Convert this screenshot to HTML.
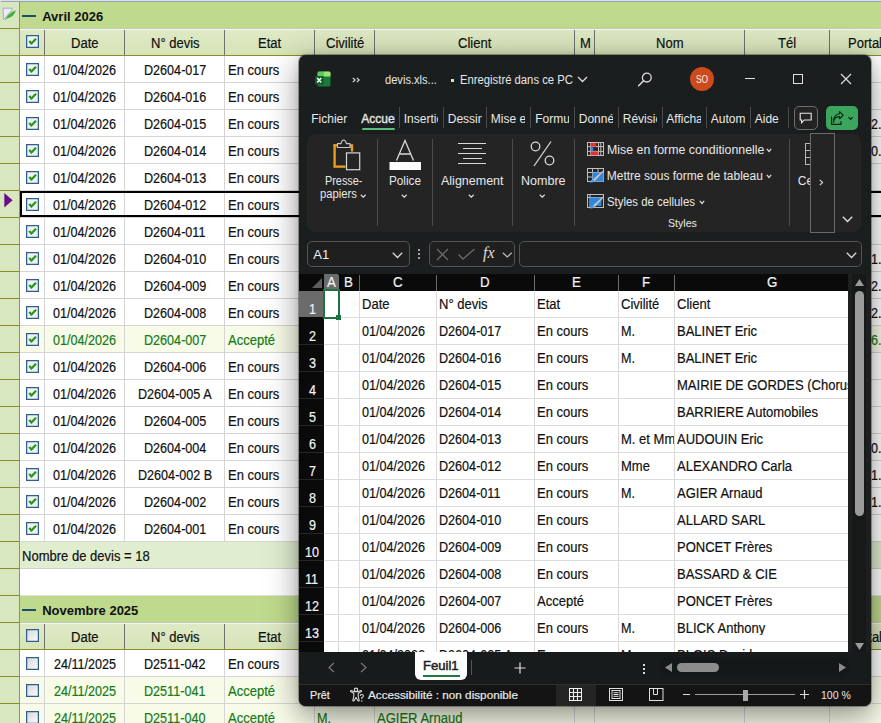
<!DOCTYPE html>
<html><head><meta charset="utf-8"><style>
html,body{margin:0;padding:0;}
body{width:881px;height:723px;overflow:hidden;position:relative;background:#fff;font-family:"Liberation Sans",sans-serif;}
.a{position:absolute;display:block;}
.t{position:absolute;white-space:nowrap;}
</style></head><body>
<div class="a" style="left:0px;top:0px;width:881px;height:1px;background:#e2e0dc"></div>
<div class="a" style="left:0px;top:1px;width:881px;height:1px;background:#8ea6c0"></div>
<div class="a" style="left:0px;top:0px;width:1px;height:723px;background:#dfe5ec"></div>
<div class="a" style="left:0px;top:2px;width:20px;height:26px;background:#d9e7c1"></div>
<div class="a" style="left:20px;top:2px;width:861px;height:26px;background:#bfda8d"></div>
<div class="a" style="left:20px;top:28px;width:861px;height:1px;background:#c4cbb6"></div>
<div class="a" style="left:19px;top:2px;width:1px;height:27px;background:#8c8c8c"></div>
<div class="a" style="left:0px;top:28px;width:19px;height:1px;background:#8d8b22"></div>
<div class="a" style="left:22px;top:15px;width:14px;height:2px;background:#1d4e70"></div>
<div class="t" style="left:42.22px;top:10px;font-size:13px;line-height:13px;color:#111;font-weight:bold;">Avril 2026</div>
<svg class="a" style="left:2px;top:7px" width="15" height="15" viewBox="0 0 15 15"><path d="M1 1.2 H10 V3 L1.6 12.6 Z" fill="#ececf2" stroke="#a4a4bc" stroke-width="0.9" stroke-linejoin="round"/><path d="M3 13.2 C4.5 9.5 7.5 5.5 13.8 3.2 C13.2 6.8 11 9.8 6.8 11 L5.6 11.2 Z" fill="#47b84a"/><path d="M5.5 10.5 L11.5 5.5" stroke="#2f9a36" stroke-width="0.7"/></svg>
<div class="a" style="left:0px;top:29px;width:19px;height:27px;background:#d9e7c1"></div>
<div class="a" style="left:19px;top:29px;width:1px;height:27px;background:#8c8c8c"></div>
<div class="a" style="left:0px;top:55px;width:19px;height:1px;background:#8d8b22"></div>
<div class="a" style="left:20px;top:29px;width:861px;height:26px;background:linear-gradient(#dfeac6,#d6e4b8)"></div>
<div class="a" style="left:20px;top:29px;width:861px;height:1px;background:#f3f5f0"></div>
<div class="a" style="left:44px;top:30px;width:1px;height:25px;background:#707070"></div>
<div class="a" style="left:124px;top:30px;width:1px;height:25px;background:#707070"></div>
<div class="a" style="left:224px;top:30px;width:1px;height:25px;background:#707070"></div>
<div class="a" style="left:314px;top:30px;width:1px;height:25px;background:#707070"></div>
<div class="a" style="left:374px;top:30px;width:1px;height:25px;background:#707070"></div>
<div class="a" style="left:574px;top:30px;width:1px;height:25px;background:#707070"></div>
<div class="a" style="left:594px;top:30px;width:1px;height:25px;background:#707070"></div>
<div class="a" style="left:744px;top:30px;width:1px;height:25px;background:#707070"></div>
<div class="a" style="left:829px;top:30px;width:1px;height:25px;background:#707070"></div>
<div class="a" style="left:0px;top:55px;width:881px;height:1px;background:#8d8b22"></div>
<svg class="a" style="left:26px;top:35px" width="13" height="13" viewBox="0 0 13 13"><rect x="0.6" y="0.6" width="11.8" height="11.8" fill="#f1f1ef" stroke="#2f5f90" stroke-width="1.3"/><path d="M3.3 5.8 L5.4 8.6 L10 3.8" fill="none" stroke="#1f9a1f" stroke-width="2.2" stroke-linejoin="round"/></svg>
<div class="t" style="left:71.25px;top:36px;font-size:14px;line-height:14px;color:#111;transform:scaleX(0.9300);transform-origin:0 0;-webkit-text-stroke:0.2px #111;">Date</div>
<div class="t" style="left:150.69px;top:36px;font-size:14px;line-height:14px;color:#111;transform:scaleX(0.9300);transform-origin:0 0;-webkit-text-stroke:0.2px #111;">N° devis</div>
<div class="t" style="left:258.42px;top:36px;font-size:14px;line-height:14px;color:#111;transform:scaleX(0.9300);transform-origin:0 0;-webkit-text-stroke:0.2px #111;">Etat</div>
<div class="t" style="left:325.83px;top:36px;font-size:14px;line-height:14px;color:#111;transform:scaleX(0.9300);transform-origin:0 0;-webkit-text-stroke:0.2px #111;">Civilité</div>
<div class="t" style="left:458.36px;top:36px;font-size:14px;line-height:14px;color:#111;transform:scaleX(0.9300);transform-origin:0 0;-webkit-text-stroke:0.2px #111;">Client</div>
<div class="t" style="left:579.58px;top:36px;font-size:14px;line-height:14px;color:#111;transform:scaleX(0.9300);transform-origin:0 0;-webkit-text-stroke:0.2px #111;">M</div>
<div class="t" style="left:656.26px;top:36px;font-size:14px;line-height:14px;color:#111;transform:scaleX(0.9300);transform-origin:0 0;-webkit-text-stroke:0.2px #111;">Nom</div>
<div class="t" style="left:778.46px;top:36px;font-size:14px;line-height:14px;color:#111;transform:scaleX(0.9300);transform-origin:0 0;-webkit-text-stroke:0.2px #111;">Tél</div>
<div class="t" style="left:848.16px;top:36px;font-size:14px;line-height:14px;color:#111;transform:scaleX(0.9300);transform-origin:0 0;-webkit-text-stroke:0.2px #111;">Portal</div>
<div class="a" style="left:0px;top:56px;width:19px;height:27px;background:#d9e7c1"></div>
<div class="a" style="left:19px;top:56px;width:1px;height:27px;background:#8c8c8c"></div>
<div class="a" style="left:0px;top:82px;width:19px;height:1px;background:#8d8b22"></div>
<div class="a" style="left:20px;top:56px;width:861px;height:26px;background:#ffffff"></div>
<div class="a" style="left:20px;top:82px;width:861px;height:1px;background:#d5d5d5"></div>
<div class="a" style="left:44px;top:56px;width:1px;height:26px;background:#d5d5d5"></div>
<div class="a" style="left:124px;top:56px;width:1px;height:26px;background:#d5d5d5"></div>
<div class="a" style="left:224px;top:56px;width:1px;height:26px;background:#d5d5d5"></div>
<div class="a" style="left:314px;top:56px;width:1px;height:26px;background:#d5d5d5"></div>
<div class="a" style="left:374px;top:56px;width:1px;height:26px;background:#d5d5d5"></div>
<div class="a" style="left:574px;top:56px;width:1px;height:26px;background:#d5d5d5"></div>
<div class="a" style="left:594px;top:56px;width:1px;height:26px;background:#d5d5d5"></div>
<div class="a" style="left:744px;top:56px;width:1px;height:26px;background:#d5d5d5"></div>
<div class="a" style="left:829px;top:56px;width:1px;height:26px;background:#d5d5d5"></div>
<svg class="a" style="left:26px;top:63px" width="13" height="13" viewBox="0 0 13 13"><rect x="0.6" y="0.6" width="11.8" height="11.8" fill="#f1f1ef" stroke="#2f5f90" stroke-width="1.3"/><path d="M3.3 5.8 L5.4 8.6 L10 3.8" fill="none" stroke="#1f9a1f" stroke-width="2.2" stroke-linejoin="round"/></svg>
<div class="t" style="left:53.47px;top:63px;font-size:14px;line-height:14px;color:#111;transform:scaleX(0.9000);transform-origin:0 0;-webkit-text-stroke:0.2px #111;">01/04/2026</div>
<div class="t" style="left:143.83px;top:63px;font-size:14px;line-height:14px;color:#111;transform:scaleX(0.9000);transform-origin:0 0;-webkit-text-stroke:0.2px #111;">D2604-017</div>
<div class="t" style="left:228.16px;top:63px;font-size:14px;line-height:14px;color:#111;transform:scaleX(0.9300);transform-origin:0 0;-webkit-text-stroke:0.2px #111;">En cours</div>
<div class="a" style="left:0px;top:83px;width:19px;height:27px;background:#d9e7c1"></div>
<div class="a" style="left:19px;top:83px;width:1px;height:27px;background:#8c8c8c"></div>
<div class="a" style="left:0px;top:109px;width:19px;height:1px;background:#8d8b22"></div>
<div class="a" style="left:20px;top:83px;width:861px;height:26px;background:#ffffff"></div>
<div class="a" style="left:20px;top:109px;width:861px;height:1px;background:#d5d5d5"></div>
<div class="a" style="left:44px;top:83px;width:1px;height:26px;background:#d5d5d5"></div>
<div class="a" style="left:124px;top:83px;width:1px;height:26px;background:#d5d5d5"></div>
<div class="a" style="left:224px;top:83px;width:1px;height:26px;background:#d5d5d5"></div>
<div class="a" style="left:314px;top:83px;width:1px;height:26px;background:#d5d5d5"></div>
<div class="a" style="left:374px;top:83px;width:1px;height:26px;background:#d5d5d5"></div>
<div class="a" style="left:574px;top:83px;width:1px;height:26px;background:#d5d5d5"></div>
<div class="a" style="left:594px;top:83px;width:1px;height:26px;background:#d5d5d5"></div>
<div class="a" style="left:744px;top:83px;width:1px;height:26px;background:#d5d5d5"></div>
<div class="a" style="left:829px;top:83px;width:1px;height:26px;background:#d5d5d5"></div>
<svg class="a" style="left:26px;top:90px" width="13" height="13" viewBox="0 0 13 13"><rect x="0.6" y="0.6" width="11.8" height="11.8" fill="#f1f1ef" stroke="#2f5f90" stroke-width="1.3"/><path d="M3.3 5.8 L5.4 8.6 L10 3.8" fill="none" stroke="#1f9a1f" stroke-width="2.2" stroke-linejoin="round"/></svg>
<div class="t" style="left:53.47px;top:90px;font-size:14px;line-height:14px;color:#111;transform:scaleX(0.9000);transform-origin:0 0;-webkit-text-stroke:0.2px #111;">01/04/2026</div>
<div class="t" style="left:143.83px;top:90px;font-size:14px;line-height:14px;color:#111;transform:scaleX(0.9000);transform-origin:0 0;-webkit-text-stroke:0.2px #111;">D2604-016</div>
<div class="t" style="left:228.16px;top:90px;font-size:14px;line-height:14px;color:#111;transform:scaleX(0.9300);transform-origin:0 0;-webkit-text-stroke:0.2px #111;">En cours</div>
<div class="a" style="left:0px;top:110px;width:19px;height:27px;background:#d9e7c1"></div>
<div class="a" style="left:19px;top:110px;width:1px;height:27px;background:#8c8c8c"></div>
<div class="a" style="left:0px;top:136px;width:19px;height:1px;background:#8d8b22"></div>
<div class="a" style="left:20px;top:110px;width:861px;height:26px;background:#ffffff"></div>
<div class="a" style="left:20px;top:136px;width:861px;height:1px;background:#d5d5d5"></div>
<div class="a" style="left:44px;top:110px;width:1px;height:26px;background:#d5d5d5"></div>
<div class="a" style="left:124px;top:110px;width:1px;height:26px;background:#d5d5d5"></div>
<div class="a" style="left:224px;top:110px;width:1px;height:26px;background:#d5d5d5"></div>
<div class="a" style="left:314px;top:110px;width:1px;height:26px;background:#d5d5d5"></div>
<div class="a" style="left:374px;top:110px;width:1px;height:26px;background:#d5d5d5"></div>
<div class="a" style="left:574px;top:110px;width:1px;height:26px;background:#d5d5d5"></div>
<div class="a" style="left:594px;top:110px;width:1px;height:26px;background:#d5d5d5"></div>
<div class="a" style="left:744px;top:110px;width:1px;height:26px;background:#d5d5d5"></div>
<div class="a" style="left:829px;top:110px;width:1px;height:26px;background:#d5d5d5"></div>
<svg class="a" style="left:26px;top:117px" width="13" height="13" viewBox="0 0 13 13"><rect x="0.6" y="0.6" width="11.8" height="11.8" fill="#f1f1ef" stroke="#2f5f90" stroke-width="1.3"/><path d="M3.3 5.8 L5.4 8.6 L10 3.8" fill="none" stroke="#1f9a1f" stroke-width="2.2" stroke-linejoin="round"/></svg>
<div class="t" style="left:53.47px;top:117px;font-size:14px;line-height:14px;color:#111;transform:scaleX(0.9000);transform-origin:0 0;-webkit-text-stroke:0.2px #111;">01/04/2026</div>
<div class="t" style="left:143.83px;top:117px;font-size:14px;line-height:14px;color:#111;transform:scaleX(0.9000);transform-origin:0 0;-webkit-text-stroke:0.2px #111;">D2604-015</div>
<div class="t" style="left:228.16px;top:117px;font-size:14px;line-height:14px;color:#111;transform:scaleX(0.9300);transform-origin:0 0;-webkit-text-stroke:0.2px #111;">En cours</div>
<div class="t" style="left:871.16px;top:117px;font-size:14px;line-height:14px;color:#111;transform:scaleX(0.9000);transform-origin:0 0;-webkit-text-stroke:0.2px #111;">2.2</div>
<div class="a" style="left:0px;top:137px;width:19px;height:27px;background:#d9e7c1"></div>
<div class="a" style="left:19px;top:137px;width:1px;height:27px;background:#8c8c8c"></div>
<div class="a" style="left:0px;top:163px;width:19px;height:1px;background:#8d8b22"></div>
<div class="a" style="left:20px;top:137px;width:861px;height:26px;background:#ffffff"></div>
<div class="a" style="left:20px;top:163px;width:861px;height:1px;background:#d5d5d5"></div>
<div class="a" style="left:44px;top:137px;width:1px;height:26px;background:#d5d5d5"></div>
<div class="a" style="left:124px;top:137px;width:1px;height:26px;background:#d5d5d5"></div>
<div class="a" style="left:224px;top:137px;width:1px;height:26px;background:#d5d5d5"></div>
<div class="a" style="left:314px;top:137px;width:1px;height:26px;background:#d5d5d5"></div>
<div class="a" style="left:374px;top:137px;width:1px;height:26px;background:#d5d5d5"></div>
<div class="a" style="left:574px;top:137px;width:1px;height:26px;background:#d5d5d5"></div>
<div class="a" style="left:594px;top:137px;width:1px;height:26px;background:#d5d5d5"></div>
<div class="a" style="left:744px;top:137px;width:1px;height:26px;background:#d5d5d5"></div>
<div class="a" style="left:829px;top:137px;width:1px;height:26px;background:#d5d5d5"></div>
<svg class="a" style="left:26px;top:144px" width="13" height="13" viewBox="0 0 13 13"><rect x="0.6" y="0.6" width="11.8" height="11.8" fill="#f1f1ef" stroke="#2f5f90" stroke-width="1.3"/><path d="M3.3 5.8 L5.4 8.6 L10 3.8" fill="none" stroke="#1f9a1f" stroke-width="2.2" stroke-linejoin="round"/></svg>
<div class="t" style="left:53.47px;top:144px;font-size:14px;line-height:14px;color:#111;transform:scaleX(0.9000);transform-origin:0 0;-webkit-text-stroke:0.2px #111;">01/04/2026</div>
<div class="t" style="left:143.83px;top:144px;font-size:14px;line-height:14px;color:#111;transform:scaleX(0.9000);transform-origin:0 0;-webkit-text-stroke:0.2px #111;">D2604-014</div>
<div class="t" style="left:228.16px;top:144px;font-size:14px;line-height:14px;color:#111;transform:scaleX(0.9300);transform-origin:0 0;-webkit-text-stroke:0.2px #111;">En cours</div>
<div class="t" style="left:871.16px;top:144px;font-size:14px;line-height:14px;color:#111;transform:scaleX(0.9000);transform-origin:0 0;-webkit-text-stroke:0.2px #111;">0.4</div>
<div class="a" style="left:0px;top:164px;width:19px;height:27px;background:#d9e7c1"></div>
<div class="a" style="left:19px;top:164px;width:1px;height:27px;background:#8c8c8c"></div>
<div class="a" style="left:0px;top:190px;width:19px;height:1px;background:#8d8b22"></div>
<div class="a" style="left:20px;top:164px;width:861px;height:26px;background:#ffffff"></div>
<div class="a" style="left:20px;top:190px;width:861px;height:1px;background:#d5d5d5"></div>
<div class="a" style="left:44px;top:164px;width:1px;height:26px;background:#d5d5d5"></div>
<div class="a" style="left:124px;top:164px;width:1px;height:26px;background:#d5d5d5"></div>
<div class="a" style="left:224px;top:164px;width:1px;height:26px;background:#d5d5d5"></div>
<div class="a" style="left:314px;top:164px;width:1px;height:26px;background:#d5d5d5"></div>
<div class="a" style="left:374px;top:164px;width:1px;height:26px;background:#d5d5d5"></div>
<div class="a" style="left:574px;top:164px;width:1px;height:26px;background:#d5d5d5"></div>
<div class="a" style="left:594px;top:164px;width:1px;height:26px;background:#d5d5d5"></div>
<div class="a" style="left:744px;top:164px;width:1px;height:26px;background:#d5d5d5"></div>
<div class="a" style="left:829px;top:164px;width:1px;height:26px;background:#d5d5d5"></div>
<svg class="a" style="left:26px;top:171px" width="13" height="13" viewBox="0 0 13 13"><rect x="0.6" y="0.6" width="11.8" height="11.8" fill="#f1f1ef" stroke="#2f5f90" stroke-width="1.3"/><path d="M3.3 5.8 L5.4 8.6 L10 3.8" fill="none" stroke="#1f9a1f" stroke-width="2.2" stroke-linejoin="round"/></svg>
<div class="t" style="left:53.47px;top:171px;font-size:14px;line-height:14px;color:#111;transform:scaleX(0.9000);transform-origin:0 0;-webkit-text-stroke:0.2px #111;">01/04/2026</div>
<div class="t" style="left:143.83px;top:171px;font-size:14px;line-height:14px;color:#111;transform:scaleX(0.9000);transform-origin:0 0;-webkit-text-stroke:0.2px #111;">D2604-013</div>
<div class="t" style="left:228.16px;top:171px;font-size:14px;line-height:14px;color:#111;transform:scaleX(0.9300);transform-origin:0 0;-webkit-text-stroke:0.2px #111;">En cours</div>
<div class="a" style="left:0px;top:191px;width:19px;height:27px;background:#d9e7c1"></div>
<div class="a" style="left:19px;top:191px;width:1px;height:27px;background:#8c8c8c"></div>
<div class="a" style="left:0px;top:217px;width:19px;height:1px;background:#8d8b22"></div>
<div class="a" style="left:20px;top:191px;width:861px;height:26px;background:#ffffff"></div>
<div class="a" style="left:20px;top:217px;width:861px;height:1px;background:#d5d5d5"></div>
<div class="a" style="left:44px;top:191px;width:1px;height:26px;background:#d5d5d5"></div>
<div class="a" style="left:124px;top:191px;width:1px;height:26px;background:#d5d5d5"></div>
<div class="a" style="left:224px;top:191px;width:1px;height:26px;background:#d5d5d5"></div>
<div class="a" style="left:314px;top:191px;width:1px;height:26px;background:#d5d5d5"></div>
<div class="a" style="left:374px;top:191px;width:1px;height:26px;background:#d5d5d5"></div>
<div class="a" style="left:574px;top:191px;width:1px;height:26px;background:#d5d5d5"></div>
<div class="a" style="left:594px;top:191px;width:1px;height:26px;background:#d5d5d5"></div>
<div class="a" style="left:744px;top:191px;width:1px;height:26px;background:#d5d5d5"></div>
<div class="a" style="left:829px;top:191px;width:1px;height:26px;background:#d5d5d5"></div>
<svg class="a" style="left:26px;top:198px" width="13" height="13" viewBox="0 0 13 13"><rect x="0.6" y="0.6" width="11.8" height="11.8" fill="#f1f1ef" stroke="#2f5f90" stroke-width="1.3"/><path d="M3.3 5.8 L5.4 8.6 L10 3.8" fill="none" stroke="#1f9a1f" stroke-width="2.2" stroke-linejoin="round"/></svg>
<div class="t" style="left:53.47px;top:198px;font-size:14px;line-height:14px;color:#111;transform:scaleX(0.9000);transform-origin:0 0;-webkit-text-stroke:0.2px #111;">01/04/2026</div>
<div class="t" style="left:143.83px;top:198px;font-size:14px;line-height:14px;color:#111;transform:scaleX(0.9000);transform-origin:0 0;-webkit-text-stroke:0.2px #111;">D2604-012</div>
<div class="t" style="left:228.16px;top:198px;font-size:14px;line-height:14px;color:#111;transform:scaleX(0.9300);transform-origin:0 0;-webkit-text-stroke:0.2px #111;">En cours</div>
<div class="a" style="left:0px;top:218px;width:19px;height:27px;background:#d9e7c1"></div>
<div class="a" style="left:19px;top:218px;width:1px;height:27px;background:#8c8c8c"></div>
<div class="a" style="left:0px;top:244px;width:19px;height:1px;background:#8d8b22"></div>
<div class="a" style="left:20px;top:218px;width:861px;height:26px;background:#ffffff"></div>
<div class="a" style="left:20px;top:244px;width:861px;height:1px;background:#d5d5d5"></div>
<div class="a" style="left:44px;top:218px;width:1px;height:26px;background:#d5d5d5"></div>
<div class="a" style="left:124px;top:218px;width:1px;height:26px;background:#d5d5d5"></div>
<div class="a" style="left:224px;top:218px;width:1px;height:26px;background:#d5d5d5"></div>
<div class="a" style="left:314px;top:218px;width:1px;height:26px;background:#d5d5d5"></div>
<div class="a" style="left:374px;top:218px;width:1px;height:26px;background:#d5d5d5"></div>
<div class="a" style="left:574px;top:218px;width:1px;height:26px;background:#d5d5d5"></div>
<div class="a" style="left:594px;top:218px;width:1px;height:26px;background:#d5d5d5"></div>
<div class="a" style="left:744px;top:218px;width:1px;height:26px;background:#d5d5d5"></div>
<div class="a" style="left:829px;top:218px;width:1px;height:26px;background:#d5d5d5"></div>
<svg class="a" style="left:26px;top:225px" width="13" height="13" viewBox="0 0 13 13"><rect x="0.6" y="0.6" width="11.8" height="11.8" fill="#f1f1ef" stroke="#2f5f90" stroke-width="1.3"/><path d="M3.3 5.8 L5.4 8.6 L10 3.8" fill="none" stroke="#1f9a1f" stroke-width="2.2" stroke-linejoin="round"/></svg>
<div class="t" style="left:53.47px;top:225px;font-size:14px;line-height:14px;color:#111;transform:scaleX(0.9000);transform-origin:0 0;-webkit-text-stroke:0.2px #111;">01/04/2026</div>
<div class="t" style="left:144.29px;top:225px;font-size:14px;line-height:14px;color:#111;transform:scaleX(0.9000);transform-origin:0 0;-webkit-text-stroke:0.2px #111;">D2604-011</div>
<div class="t" style="left:228.16px;top:225px;font-size:14px;line-height:14px;color:#111;transform:scaleX(0.9300);transform-origin:0 0;-webkit-text-stroke:0.2px #111;">En cours</div>
<div class="a" style="left:0px;top:245px;width:19px;height:27px;background:#d9e7c1"></div>
<div class="a" style="left:19px;top:245px;width:1px;height:27px;background:#8c8c8c"></div>
<div class="a" style="left:0px;top:271px;width:19px;height:1px;background:#8d8b22"></div>
<div class="a" style="left:20px;top:245px;width:861px;height:26px;background:#ffffff"></div>
<div class="a" style="left:20px;top:271px;width:861px;height:1px;background:#d5d5d5"></div>
<div class="a" style="left:44px;top:245px;width:1px;height:26px;background:#d5d5d5"></div>
<div class="a" style="left:124px;top:245px;width:1px;height:26px;background:#d5d5d5"></div>
<div class="a" style="left:224px;top:245px;width:1px;height:26px;background:#d5d5d5"></div>
<div class="a" style="left:314px;top:245px;width:1px;height:26px;background:#d5d5d5"></div>
<div class="a" style="left:374px;top:245px;width:1px;height:26px;background:#d5d5d5"></div>
<div class="a" style="left:574px;top:245px;width:1px;height:26px;background:#d5d5d5"></div>
<div class="a" style="left:594px;top:245px;width:1px;height:26px;background:#d5d5d5"></div>
<div class="a" style="left:744px;top:245px;width:1px;height:26px;background:#d5d5d5"></div>
<div class="a" style="left:829px;top:245px;width:1px;height:26px;background:#d5d5d5"></div>
<svg class="a" style="left:26px;top:252px" width="13" height="13" viewBox="0 0 13 13"><rect x="0.6" y="0.6" width="11.8" height="11.8" fill="#f1f1ef" stroke="#2f5f90" stroke-width="1.3"/><path d="M3.3 5.8 L5.4 8.6 L10 3.8" fill="none" stroke="#1f9a1f" stroke-width="2.2" stroke-linejoin="round"/></svg>
<div class="t" style="left:53.47px;top:252px;font-size:14px;line-height:14px;color:#111;transform:scaleX(0.9000);transform-origin:0 0;-webkit-text-stroke:0.2px #111;">01/04/2026</div>
<div class="t" style="left:143.83px;top:252px;font-size:14px;line-height:14px;color:#111;transform:scaleX(0.9000);transform-origin:0 0;-webkit-text-stroke:0.2px #111;">D2604-010</div>
<div class="t" style="left:228.16px;top:252px;font-size:14px;line-height:14px;color:#111;transform:scaleX(0.9300);transform-origin:0 0;-webkit-text-stroke:0.2px #111;">En cours</div>
<div class="t" style="left:871.16px;top:252px;font-size:14px;line-height:14px;color:#111;transform:scaleX(0.9000);transform-origin:0 0;-webkit-text-stroke:0.2px #111;">1.1</div>
<div class="a" style="left:0px;top:272px;width:19px;height:27px;background:#d9e7c1"></div>
<div class="a" style="left:19px;top:272px;width:1px;height:27px;background:#8c8c8c"></div>
<div class="a" style="left:0px;top:298px;width:19px;height:1px;background:#8d8b22"></div>
<div class="a" style="left:20px;top:272px;width:861px;height:26px;background:#ffffff"></div>
<div class="a" style="left:20px;top:298px;width:861px;height:1px;background:#d5d5d5"></div>
<div class="a" style="left:44px;top:272px;width:1px;height:26px;background:#d5d5d5"></div>
<div class="a" style="left:124px;top:272px;width:1px;height:26px;background:#d5d5d5"></div>
<div class="a" style="left:224px;top:272px;width:1px;height:26px;background:#d5d5d5"></div>
<div class="a" style="left:314px;top:272px;width:1px;height:26px;background:#d5d5d5"></div>
<div class="a" style="left:374px;top:272px;width:1px;height:26px;background:#d5d5d5"></div>
<div class="a" style="left:574px;top:272px;width:1px;height:26px;background:#d5d5d5"></div>
<div class="a" style="left:594px;top:272px;width:1px;height:26px;background:#d5d5d5"></div>
<div class="a" style="left:744px;top:272px;width:1px;height:26px;background:#d5d5d5"></div>
<div class="a" style="left:829px;top:272px;width:1px;height:26px;background:#d5d5d5"></div>
<svg class="a" style="left:26px;top:279px" width="13" height="13" viewBox="0 0 13 13"><rect x="0.6" y="0.6" width="11.8" height="11.8" fill="#f1f1ef" stroke="#2f5f90" stroke-width="1.3"/><path d="M3.3 5.8 L5.4 8.6 L10 3.8" fill="none" stroke="#1f9a1f" stroke-width="2.2" stroke-linejoin="round"/></svg>
<div class="t" style="left:53.47px;top:279px;font-size:14px;line-height:14px;color:#111;transform:scaleX(0.9000);transform-origin:0 0;-webkit-text-stroke:0.2px #111;">01/04/2026</div>
<div class="t" style="left:143.83px;top:279px;font-size:14px;line-height:14px;color:#111;transform:scaleX(0.9000);transform-origin:0 0;-webkit-text-stroke:0.2px #111;">D2604-009</div>
<div class="t" style="left:228.16px;top:279px;font-size:14px;line-height:14px;color:#111;transform:scaleX(0.9300);transform-origin:0 0;-webkit-text-stroke:0.2px #111;">En cours</div>
<div class="t" style="left:871.16px;top:279px;font-size:14px;line-height:14px;color:#111;transform:scaleX(0.9000);transform-origin:0 0;-webkit-text-stroke:0.2px #111;">2.2</div>
<div class="a" style="left:0px;top:299px;width:19px;height:27px;background:#d9e7c1"></div>
<div class="a" style="left:19px;top:299px;width:1px;height:27px;background:#8c8c8c"></div>
<div class="a" style="left:0px;top:325px;width:19px;height:1px;background:#8d8b22"></div>
<div class="a" style="left:20px;top:299px;width:861px;height:26px;background:#ffffff"></div>
<div class="a" style="left:20px;top:325px;width:861px;height:1px;background:#d5d5d5"></div>
<div class="a" style="left:44px;top:299px;width:1px;height:26px;background:#d5d5d5"></div>
<div class="a" style="left:124px;top:299px;width:1px;height:26px;background:#d5d5d5"></div>
<div class="a" style="left:224px;top:299px;width:1px;height:26px;background:#d5d5d5"></div>
<div class="a" style="left:314px;top:299px;width:1px;height:26px;background:#d5d5d5"></div>
<div class="a" style="left:374px;top:299px;width:1px;height:26px;background:#d5d5d5"></div>
<div class="a" style="left:574px;top:299px;width:1px;height:26px;background:#d5d5d5"></div>
<div class="a" style="left:594px;top:299px;width:1px;height:26px;background:#d5d5d5"></div>
<div class="a" style="left:744px;top:299px;width:1px;height:26px;background:#d5d5d5"></div>
<div class="a" style="left:829px;top:299px;width:1px;height:26px;background:#d5d5d5"></div>
<svg class="a" style="left:26px;top:306px" width="13" height="13" viewBox="0 0 13 13"><rect x="0.6" y="0.6" width="11.8" height="11.8" fill="#f1f1ef" stroke="#2f5f90" stroke-width="1.3"/><path d="M3.3 5.8 L5.4 8.6 L10 3.8" fill="none" stroke="#1f9a1f" stroke-width="2.2" stroke-linejoin="round"/></svg>
<div class="t" style="left:53.47px;top:306px;font-size:14px;line-height:14px;color:#111;transform:scaleX(0.9000);transform-origin:0 0;-webkit-text-stroke:0.2px #111;">01/04/2026</div>
<div class="t" style="left:143.83px;top:306px;font-size:14px;line-height:14px;color:#111;transform:scaleX(0.9000);transform-origin:0 0;-webkit-text-stroke:0.2px #111;">D2604-008</div>
<div class="t" style="left:228.16px;top:306px;font-size:14px;line-height:14px;color:#111;transform:scaleX(0.9300);transform-origin:0 0;-webkit-text-stroke:0.2px #111;">En cours</div>
<div class="t" style="left:871.16px;top:306px;font-size:14px;line-height:14px;color:#111;transform:scaleX(0.9000);transform-origin:0 0;-webkit-text-stroke:0.2px #111;">2.2</div>
<div class="a" style="left:0px;top:326px;width:19px;height:27px;background:#d9e7c1"></div>
<div class="a" style="left:19px;top:326px;width:1px;height:27px;background:#8c8c8c"></div>
<div class="a" style="left:0px;top:352px;width:19px;height:1px;background:#8d8b22"></div>
<div class="a" style="left:20px;top:326px;width:861px;height:26px;background:#f8fbe8"></div>
<div class="a" style="left:20px;top:352px;width:861px;height:1px;background:#d5d5d5"></div>
<div class="a" style="left:44px;top:326px;width:1px;height:26px;background:#d5d5d5"></div>
<div class="a" style="left:124px;top:326px;width:1px;height:26px;background:#d5d5d5"></div>
<div class="a" style="left:224px;top:326px;width:1px;height:26px;background:#d5d5d5"></div>
<div class="a" style="left:314px;top:326px;width:1px;height:26px;background:#d5d5d5"></div>
<div class="a" style="left:374px;top:326px;width:1px;height:26px;background:#d5d5d5"></div>
<div class="a" style="left:574px;top:326px;width:1px;height:26px;background:#d5d5d5"></div>
<div class="a" style="left:594px;top:326px;width:1px;height:26px;background:#d5d5d5"></div>
<div class="a" style="left:744px;top:326px;width:1px;height:26px;background:#d5d5d5"></div>
<div class="a" style="left:829px;top:326px;width:1px;height:26px;background:#d5d5d5"></div>
<svg class="a" style="left:26px;top:333px" width="13" height="13" viewBox="0 0 13 13"><rect x="0.6" y="0.6" width="11.8" height="11.8" fill="#f1f1ef" stroke="#2f5f90" stroke-width="1.3"/><path d="M3.3 5.8 L5.4 8.6 L10 3.8" fill="none" stroke="#1f9a1f" stroke-width="2.2" stroke-linejoin="round"/></svg>
<div class="t" style="left:53.47px;top:333px;font-size:14px;line-height:14px;color:#157c19;transform:scaleX(0.9000);transform-origin:0 0;-webkit-text-stroke:0.2px #157c19;">01/04/2026</div>
<div class="t" style="left:143.83px;top:333px;font-size:14px;line-height:14px;color:#157c19;transform:scaleX(0.9000);transform-origin:0 0;-webkit-text-stroke:0.2px #157c19;">D2604-007</div>
<div class="t" style="left:228.16px;top:333px;font-size:14px;line-height:14px;color:#157c19;transform:scaleX(0.9300);transform-origin:0 0;-webkit-text-stroke:0.2px #157c19;">Accepté</div>
<div class="t" style="left:871.16px;top:333px;font-size:14px;line-height:14px;color:#157c19;transform:scaleX(0.9000);transform-origin:0 0;-webkit-text-stroke:0.2px #157c19;">6.6</div>
<div class="a" style="left:0px;top:353px;width:19px;height:27px;background:#d9e7c1"></div>
<div class="a" style="left:19px;top:353px;width:1px;height:27px;background:#8c8c8c"></div>
<div class="a" style="left:0px;top:379px;width:19px;height:1px;background:#8d8b22"></div>
<div class="a" style="left:20px;top:353px;width:861px;height:26px;background:#ffffff"></div>
<div class="a" style="left:20px;top:379px;width:861px;height:1px;background:#d5d5d5"></div>
<div class="a" style="left:44px;top:353px;width:1px;height:26px;background:#d5d5d5"></div>
<div class="a" style="left:124px;top:353px;width:1px;height:26px;background:#d5d5d5"></div>
<div class="a" style="left:224px;top:353px;width:1px;height:26px;background:#d5d5d5"></div>
<div class="a" style="left:314px;top:353px;width:1px;height:26px;background:#d5d5d5"></div>
<div class="a" style="left:374px;top:353px;width:1px;height:26px;background:#d5d5d5"></div>
<div class="a" style="left:574px;top:353px;width:1px;height:26px;background:#d5d5d5"></div>
<div class="a" style="left:594px;top:353px;width:1px;height:26px;background:#d5d5d5"></div>
<div class="a" style="left:744px;top:353px;width:1px;height:26px;background:#d5d5d5"></div>
<div class="a" style="left:829px;top:353px;width:1px;height:26px;background:#d5d5d5"></div>
<svg class="a" style="left:26px;top:360px" width="13" height="13" viewBox="0 0 13 13"><rect x="0.6" y="0.6" width="11.8" height="11.8" fill="#f1f1ef" stroke="#2f5f90" stroke-width="1.3"/><path d="M3.3 5.8 L5.4 8.6 L10 3.8" fill="none" stroke="#1f9a1f" stroke-width="2.2" stroke-linejoin="round"/></svg>
<div class="t" style="left:53.47px;top:360px;font-size:14px;line-height:14px;color:#111;transform:scaleX(0.9000);transform-origin:0 0;-webkit-text-stroke:0.2px #111;">01/04/2026</div>
<div class="t" style="left:143.83px;top:360px;font-size:14px;line-height:14px;color:#111;transform:scaleX(0.9000);transform-origin:0 0;-webkit-text-stroke:0.2px #111;">D2604-006</div>
<div class="t" style="left:228.16px;top:360px;font-size:14px;line-height:14px;color:#111;transform:scaleX(0.9300);transform-origin:0 0;-webkit-text-stroke:0.2px #111;">En cours</div>
<div class="a" style="left:0px;top:380px;width:19px;height:27px;background:#d9e7c1"></div>
<div class="a" style="left:19px;top:380px;width:1px;height:27px;background:#8c8c8c"></div>
<div class="a" style="left:0px;top:406px;width:19px;height:1px;background:#8d8b22"></div>
<div class="a" style="left:20px;top:380px;width:861px;height:26px;background:#ffffff"></div>
<div class="a" style="left:20px;top:406px;width:861px;height:1px;background:#d5d5d5"></div>
<div class="a" style="left:44px;top:380px;width:1px;height:26px;background:#d5d5d5"></div>
<div class="a" style="left:124px;top:380px;width:1px;height:26px;background:#d5d5d5"></div>
<div class="a" style="left:224px;top:380px;width:1px;height:26px;background:#d5d5d5"></div>
<div class="a" style="left:314px;top:380px;width:1px;height:26px;background:#d5d5d5"></div>
<div class="a" style="left:374px;top:380px;width:1px;height:26px;background:#d5d5d5"></div>
<div class="a" style="left:574px;top:380px;width:1px;height:26px;background:#d5d5d5"></div>
<div class="a" style="left:594px;top:380px;width:1px;height:26px;background:#d5d5d5"></div>
<div class="a" style="left:744px;top:380px;width:1px;height:26px;background:#d5d5d5"></div>
<div class="a" style="left:829px;top:380px;width:1px;height:26px;background:#d5d5d5"></div>
<svg class="a" style="left:26px;top:387px" width="13" height="13" viewBox="0 0 13 13"><rect x="0.6" y="0.6" width="11.8" height="11.8" fill="#f1f1ef" stroke="#2f5f90" stroke-width="1.3"/><path d="M3.3 5.8 L5.4 8.6 L10 3.8" fill="none" stroke="#1f9a1f" stroke-width="2.2" stroke-linejoin="round"/></svg>
<div class="t" style="left:53.47px;top:387px;font-size:14px;line-height:14px;color:#111;transform:scaleX(0.9000);transform-origin:0 0;-webkit-text-stroke:0.2px #111;">01/04/2026</div>
<div class="t" style="left:137.87px;top:387px;font-size:14px;line-height:14px;color:#111;transform:scaleX(0.9000);transform-origin:0 0;-webkit-text-stroke:0.2px #111;">D2604-005 A</div>
<div class="t" style="left:228.16px;top:387px;font-size:14px;line-height:14px;color:#111;transform:scaleX(0.9300);transform-origin:0 0;-webkit-text-stroke:0.2px #111;">En cours</div>
<div class="a" style="left:0px;top:407px;width:19px;height:27px;background:#d9e7c1"></div>
<div class="a" style="left:19px;top:407px;width:1px;height:27px;background:#8c8c8c"></div>
<div class="a" style="left:0px;top:433px;width:19px;height:1px;background:#8d8b22"></div>
<div class="a" style="left:20px;top:407px;width:861px;height:26px;background:#ffffff"></div>
<div class="a" style="left:20px;top:433px;width:861px;height:1px;background:#d5d5d5"></div>
<div class="a" style="left:44px;top:407px;width:1px;height:26px;background:#d5d5d5"></div>
<div class="a" style="left:124px;top:407px;width:1px;height:26px;background:#d5d5d5"></div>
<div class="a" style="left:224px;top:407px;width:1px;height:26px;background:#d5d5d5"></div>
<div class="a" style="left:314px;top:407px;width:1px;height:26px;background:#d5d5d5"></div>
<div class="a" style="left:374px;top:407px;width:1px;height:26px;background:#d5d5d5"></div>
<div class="a" style="left:574px;top:407px;width:1px;height:26px;background:#d5d5d5"></div>
<div class="a" style="left:594px;top:407px;width:1px;height:26px;background:#d5d5d5"></div>
<div class="a" style="left:744px;top:407px;width:1px;height:26px;background:#d5d5d5"></div>
<div class="a" style="left:829px;top:407px;width:1px;height:26px;background:#d5d5d5"></div>
<svg class="a" style="left:26px;top:414px" width="13" height="13" viewBox="0 0 13 13"><rect x="0.6" y="0.6" width="11.8" height="11.8" fill="#f1f1ef" stroke="#2f5f90" stroke-width="1.3"/><path d="M3.3 5.8 L5.4 8.6 L10 3.8" fill="none" stroke="#1f9a1f" stroke-width="2.2" stroke-linejoin="round"/></svg>
<div class="t" style="left:53.47px;top:414px;font-size:14px;line-height:14px;color:#111;transform:scaleX(0.9000);transform-origin:0 0;-webkit-text-stroke:0.2px #111;">01/04/2026</div>
<div class="t" style="left:143.83px;top:414px;font-size:14px;line-height:14px;color:#111;transform:scaleX(0.9000);transform-origin:0 0;-webkit-text-stroke:0.2px #111;">D2604-005</div>
<div class="t" style="left:228.16px;top:414px;font-size:14px;line-height:14px;color:#111;transform:scaleX(0.9300);transform-origin:0 0;-webkit-text-stroke:0.2px #111;">En cours</div>
<div class="a" style="left:0px;top:434px;width:19px;height:27px;background:#d9e7c1"></div>
<div class="a" style="left:19px;top:434px;width:1px;height:27px;background:#8c8c8c"></div>
<div class="a" style="left:0px;top:460px;width:19px;height:1px;background:#8d8b22"></div>
<div class="a" style="left:20px;top:434px;width:861px;height:26px;background:#ffffff"></div>
<div class="a" style="left:20px;top:460px;width:861px;height:1px;background:#d5d5d5"></div>
<div class="a" style="left:44px;top:434px;width:1px;height:26px;background:#d5d5d5"></div>
<div class="a" style="left:124px;top:434px;width:1px;height:26px;background:#d5d5d5"></div>
<div class="a" style="left:224px;top:434px;width:1px;height:26px;background:#d5d5d5"></div>
<div class="a" style="left:314px;top:434px;width:1px;height:26px;background:#d5d5d5"></div>
<div class="a" style="left:374px;top:434px;width:1px;height:26px;background:#d5d5d5"></div>
<div class="a" style="left:574px;top:434px;width:1px;height:26px;background:#d5d5d5"></div>
<div class="a" style="left:594px;top:434px;width:1px;height:26px;background:#d5d5d5"></div>
<div class="a" style="left:744px;top:434px;width:1px;height:26px;background:#d5d5d5"></div>
<div class="a" style="left:829px;top:434px;width:1px;height:26px;background:#d5d5d5"></div>
<svg class="a" style="left:26px;top:441px" width="13" height="13" viewBox="0 0 13 13"><rect x="0.6" y="0.6" width="11.8" height="11.8" fill="#f1f1ef" stroke="#2f5f90" stroke-width="1.3"/><path d="M3.3 5.8 L5.4 8.6 L10 3.8" fill="none" stroke="#1f9a1f" stroke-width="2.2" stroke-linejoin="round"/></svg>
<div class="t" style="left:53.47px;top:441px;font-size:14px;line-height:14px;color:#111;transform:scaleX(0.9000);transform-origin:0 0;-webkit-text-stroke:0.2px #111;">01/04/2026</div>
<div class="t" style="left:143.83px;top:441px;font-size:14px;line-height:14px;color:#111;transform:scaleX(0.9000);transform-origin:0 0;-webkit-text-stroke:0.2px #111;">D2604-004</div>
<div class="t" style="left:228.16px;top:441px;font-size:14px;line-height:14px;color:#111;transform:scaleX(0.9300);transform-origin:0 0;-webkit-text-stroke:0.2px #111;">En cours</div>
<div class="t" style="left:871.16px;top:441px;font-size:14px;line-height:14px;color:#111;transform:scaleX(0.9000);transform-origin:0 0;-webkit-text-stroke:0.2px #111;">0.4</div>
<div class="a" style="left:0px;top:461px;width:19px;height:27px;background:#d9e7c1"></div>
<div class="a" style="left:19px;top:461px;width:1px;height:27px;background:#8c8c8c"></div>
<div class="a" style="left:0px;top:487px;width:19px;height:1px;background:#8d8b22"></div>
<div class="a" style="left:20px;top:461px;width:861px;height:26px;background:#ffffff"></div>
<div class="a" style="left:20px;top:487px;width:861px;height:1px;background:#d5d5d5"></div>
<div class="a" style="left:44px;top:461px;width:1px;height:26px;background:#d5d5d5"></div>
<div class="a" style="left:124px;top:461px;width:1px;height:26px;background:#d5d5d5"></div>
<div class="a" style="left:224px;top:461px;width:1px;height:26px;background:#d5d5d5"></div>
<div class="a" style="left:314px;top:461px;width:1px;height:26px;background:#d5d5d5"></div>
<div class="a" style="left:374px;top:461px;width:1px;height:26px;background:#d5d5d5"></div>
<div class="a" style="left:574px;top:461px;width:1px;height:26px;background:#d5d5d5"></div>
<div class="a" style="left:594px;top:461px;width:1px;height:26px;background:#d5d5d5"></div>
<div class="a" style="left:744px;top:461px;width:1px;height:26px;background:#d5d5d5"></div>
<div class="a" style="left:829px;top:461px;width:1px;height:26px;background:#d5d5d5"></div>
<svg class="a" style="left:26px;top:468px" width="13" height="13" viewBox="0 0 13 13"><rect x="0.6" y="0.6" width="11.8" height="11.8" fill="#f1f1ef" stroke="#2f5f90" stroke-width="1.3"/><path d="M3.3 5.8 L5.4 8.6 L10 3.8" fill="none" stroke="#1f9a1f" stroke-width="2.2" stroke-linejoin="round"/></svg>
<div class="t" style="left:53.47px;top:468px;font-size:14px;line-height:14px;color:#111;transform:scaleX(0.9000);transform-origin:0 0;-webkit-text-stroke:0.2px #111;">01/04/2026</div>
<div class="t" style="left:137.87px;top:468px;font-size:14px;line-height:14px;color:#111;transform:scaleX(0.9000);transform-origin:0 0;-webkit-text-stroke:0.2px #111;">D2604-002 B</div>
<div class="t" style="left:228.16px;top:468px;font-size:14px;line-height:14px;color:#111;transform:scaleX(0.9300);transform-origin:0 0;-webkit-text-stroke:0.2px #111;">En cours</div>
<div class="t" style="left:871.16px;top:468px;font-size:14px;line-height:14px;color:#111;transform:scaleX(0.9000);transform-origin:0 0;-webkit-text-stroke:0.2px #111;">1.1</div>
<div class="a" style="left:0px;top:488px;width:19px;height:27px;background:#d9e7c1"></div>
<div class="a" style="left:19px;top:488px;width:1px;height:27px;background:#8c8c8c"></div>
<div class="a" style="left:0px;top:514px;width:19px;height:1px;background:#8d8b22"></div>
<div class="a" style="left:20px;top:488px;width:861px;height:26px;background:#ffffff"></div>
<div class="a" style="left:20px;top:514px;width:861px;height:1px;background:#d5d5d5"></div>
<div class="a" style="left:44px;top:488px;width:1px;height:26px;background:#d5d5d5"></div>
<div class="a" style="left:124px;top:488px;width:1px;height:26px;background:#d5d5d5"></div>
<div class="a" style="left:224px;top:488px;width:1px;height:26px;background:#d5d5d5"></div>
<div class="a" style="left:314px;top:488px;width:1px;height:26px;background:#d5d5d5"></div>
<div class="a" style="left:374px;top:488px;width:1px;height:26px;background:#d5d5d5"></div>
<div class="a" style="left:574px;top:488px;width:1px;height:26px;background:#d5d5d5"></div>
<div class="a" style="left:594px;top:488px;width:1px;height:26px;background:#d5d5d5"></div>
<div class="a" style="left:744px;top:488px;width:1px;height:26px;background:#d5d5d5"></div>
<div class="a" style="left:829px;top:488px;width:1px;height:26px;background:#d5d5d5"></div>
<svg class="a" style="left:26px;top:495px" width="13" height="13" viewBox="0 0 13 13"><rect x="0.6" y="0.6" width="11.8" height="11.8" fill="#f1f1ef" stroke="#2f5f90" stroke-width="1.3"/><path d="M3.3 5.8 L5.4 8.6 L10 3.8" fill="none" stroke="#1f9a1f" stroke-width="2.2" stroke-linejoin="round"/></svg>
<div class="t" style="left:53.47px;top:495px;font-size:14px;line-height:14px;color:#111;transform:scaleX(0.9000);transform-origin:0 0;-webkit-text-stroke:0.2px #111;">01/04/2026</div>
<div class="t" style="left:143.83px;top:495px;font-size:14px;line-height:14px;color:#111;transform:scaleX(0.9000);transform-origin:0 0;-webkit-text-stroke:0.2px #111;">D2604-002</div>
<div class="t" style="left:228.16px;top:495px;font-size:14px;line-height:14px;color:#111;transform:scaleX(0.9300);transform-origin:0 0;-webkit-text-stroke:0.2px #111;">En cours</div>
<div class="t" style="left:871.16px;top:495px;font-size:14px;line-height:14px;color:#111;transform:scaleX(0.9000);transform-origin:0 0;-webkit-text-stroke:0.2px #111;">1.1</div>
<div class="a" style="left:0px;top:515px;width:19px;height:27px;background:#d9e7c1"></div>
<div class="a" style="left:19px;top:515px;width:1px;height:27px;background:#8c8c8c"></div>
<div class="a" style="left:0px;top:541px;width:19px;height:1px;background:#8d8b22"></div>
<div class="a" style="left:20px;top:515px;width:861px;height:26px;background:#ffffff"></div>
<div class="a" style="left:20px;top:541px;width:861px;height:1px;background:#d5d5d5"></div>
<div class="a" style="left:44px;top:515px;width:1px;height:26px;background:#d5d5d5"></div>
<div class="a" style="left:124px;top:515px;width:1px;height:26px;background:#d5d5d5"></div>
<div class="a" style="left:224px;top:515px;width:1px;height:26px;background:#d5d5d5"></div>
<div class="a" style="left:314px;top:515px;width:1px;height:26px;background:#d5d5d5"></div>
<div class="a" style="left:374px;top:515px;width:1px;height:26px;background:#d5d5d5"></div>
<div class="a" style="left:574px;top:515px;width:1px;height:26px;background:#d5d5d5"></div>
<div class="a" style="left:594px;top:515px;width:1px;height:26px;background:#d5d5d5"></div>
<div class="a" style="left:744px;top:515px;width:1px;height:26px;background:#d5d5d5"></div>
<div class="a" style="left:829px;top:515px;width:1px;height:26px;background:#d5d5d5"></div>
<svg class="a" style="left:26px;top:522px" width="13" height="13" viewBox="0 0 13 13"><rect x="0.6" y="0.6" width="11.8" height="11.8" fill="#f1f1ef" stroke="#2f5f90" stroke-width="1.3"/><path d="M3.3 5.8 L5.4 8.6 L10 3.8" fill="none" stroke="#1f9a1f" stroke-width="2.2" stroke-linejoin="round"/></svg>
<div class="t" style="left:53.47px;top:522px;font-size:14px;line-height:14px;color:#111;transform:scaleX(0.9000);transform-origin:0 0;-webkit-text-stroke:0.2px #111;">01/04/2026</div>
<div class="t" style="left:143.83px;top:522px;font-size:14px;line-height:14px;color:#111;transform:scaleX(0.9000);transform-origin:0 0;-webkit-text-stroke:0.2px #111;">D2604-001</div>
<div class="t" style="left:228.16px;top:522px;font-size:14px;line-height:14px;color:#111;transform:scaleX(0.9300);transform-origin:0 0;-webkit-text-stroke:0.2px #111;">En cours</div>
<div class="a" style="left:20px;top:191px;width:861px;height:2px;background:#000"></div>
<div class="a" style="left:20px;top:215px;width:861px;height:2px;background:#000"></div>
<div class="a" style="left:20px;top:191px;width:2px;height:26px;background:#000"></div>
<svg class="a" style="left:4px;top:193px" width="9" height="15" viewBox="0 0 9 15"><path d="M0.3 0 L8.6 7.2 L0.3 14.5 Z" fill="#670c8c"/></svg>
<div class="a" style="left:0px;top:542px;width:19px;height:27px;background:#d9e7c1"></div>
<div class="a" style="left:19px;top:542px;width:1px;height:27px;background:#8c8c8c"></div>
<div class="a" style="left:0px;top:568px;width:19px;height:1px;background:#8d8b22"></div>
<div class="a" style="left:20px;top:542px;width:861px;height:26px;background:#e1edcf"></div>
<div class="a" style="left:20px;top:568px;width:861px;height:1px;background:#cfcfcf"></div>
<div class="t" style="left:22.16px;top:549px;font-size:14px;line-height:14px;color:#111;transform:scaleX(0.9300);transform-origin:0 0;-webkit-text-stroke:0.2px #111;">Nombre de devis = 18</div>
<div class="a" style="left:0px;top:569px;width:19px;height:27px;background:#d9e7c1"></div>
<div class="a" style="left:19px;top:569px;width:1px;height:27px;background:#8c8c8c"></div>
<div class="a" style="left:0px;top:595px;width:19px;height:1px;background:#8d8b22"></div>
<div class="a" style="left:20px;top:595px;width:861px;height:1px;background:#e0e0e0"></div>
<div class="a" style="left:0px;top:596px;width:20px;height:26px;background:#d9e7c1"></div>
<div class="a" style="left:20px;top:596px;width:861px;height:26px;background:#bfda8d"></div>
<div class="a" style="left:20px;top:622px;width:861px;height:1px;background:#c4cbb6"></div>
<div class="a" style="left:19px;top:596px;width:1px;height:27px;background:#8c8c8c"></div>
<div class="a" style="left:0px;top:622px;width:19px;height:1px;background:#8d8b22"></div>
<div class="a" style="left:22px;top:609px;width:14px;height:2px;background:#1d4e70"></div>
<div class="t" style="left:42.22px;top:604px;font-size:13px;line-height:13px;color:#111;font-weight:bold;">Novembre 2025</div>
<div class="a" style="left:0px;top:623px;width:19px;height:27px;background:#d9e7c1"></div>
<div class="a" style="left:19px;top:623px;width:1px;height:27px;background:#8c8c8c"></div>
<div class="a" style="left:0px;top:649px;width:19px;height:1px;background:#8d8b22"></div>
<div class="a" style="left:20px;top:623px;width:861px;height:26px;background:linear-gradient(#dfeac6,#d6e4b8)"></div>
<div class="a" style="left:20px;top:623px;width:861px;height:1px;background:#f3f5f0"></div>
<div class="a" style="left:44px;top:624px;width:1px;height:25px;background:#707070"></div>
<div class="a" style="left:124px;top:624px;width:1px;height:25px;background:#707070"></div>
<div class="a" style="left:224px;top:624px;width:1px;height:25px;background:#707070"></div>
<div class="a" style="left:314px;top:624px;width:1px;height:25px;background:#707070"></div>
<div class="a" style="left:374px;top:624px;width:1px;height:25px;background:#707070"></div>
<div class="a" style="left:574px;top:624px;width:1px;height:25px;background:#707070"></div>
<div class="a" style="left:594px;top:624px;width:1px;height:25px;background:#707070"></div>
<div class="a" style="left:744px;top:624px;width:1px;height:25px;background:#707070"></div>
<div class="a" style="left:829px;top:624px;width:1px;height:25px;background:#707070"></div>
<div class="a" style="left:0px;top:649px;width:881px;height:1px;background:#8d8b22"></div>
<svg class="a" style="left:26px;top:629px" width="13" height="13" viewBox="0 0 13 13"><defs><linearGradient id="ug" x1="0" y1="0" x2="1" y2="1"><stop offset="0" stop-color="#d6d6d6"/><stop offset="1" stop-color="#fdfdfd"/></linearGradient></defs><rect x="0.6" y="0.6" width="11.8" height="11.8" fill="url(#ug)" stroke="#2f5f90" stroke-width="1.3"/></svg>
<div class="t" style="left:71.25px;top:630px;font-size:14px;line-height:14px;color:#111;transform:scaleX(0.9300);transform-origin:0 0;-webkit-text-stroke:0.2px #111;">Date</div>
<div class="t" style="left:150.69px;top:630px;font-size:14px;line-height:14px;color:#111;transform:scaleX(0.9300);transform-origin:0 0;-webkit-text-stroke:0.2px #111;">N° devis</div>
<div class="t" style="left:258.42px;top:630px;font-size:14px;line-height:14px;color:#111;transform:scaleX(0.9300);transform-origin:0 0;-webkit-text-stroke:0.2px #111;">Etat</div>
<div class="t" style="left:325.83px;top:630px;font-size:14px;line-height:14px;color:#111;transform:scaleX(0.9300);transform-origin:0 0;-webkit-text-stroke:0.2px #111;">Civilité</div>
<div class="t" style="left:458.36px;top:630px;font-size:14px;line-height:14px;color:#111;transform:scaleX(0.9300);transform-origin:0 0;-webkit-text-stroke:0.2px #111;">Client</div>
<div class="t" style="left:579.58px;top:630px;font-size:14px;line-height:14px;color:#111;transform:scaleX(0.9300);transform-origin:0 0;-webkit-text-stroke:0.2px #111;">M</div>
<div class="t" style="left:656.26px;top:630px;font-size:14px;line-height:14px;color:#111;transform:scaleX(0.9300);transform-origin:0 0;-webkit-text-stroke:0.2px #111;">Nom</div>
<div class="t" style="left:778.46px;top:630px;font-size:14px;line-height:14px;color:#111;transform:scaleX(0.9300);transform-origin:0 0;-webkit-text-stroke:0.2px #111;">Tél</div>
<div class="t" style="left:848.16px;top:630px;font-size:14px;line-height:14px;color:#111;transform:scaleX(0.9300);transform-origin:0 0;-webkit-text-stroke:0.2px #111;">Portal</div>
<div class="a" style="left:0px;top:650px;width:19px;height:27px;background:#d9e7c1"></div>
<div class="a" style="left:19px;top:650px;width:1px;height:27px;background:#8c8c8c"></div>
<div class="a" style="left:0px;top:676px;width:19px;height:1px;background:#8d8b22"></div>
<div class="a" style="left:20px;top:650px;width:861px;height:26px;background:#ffffff"></div>
<div class="a" style="left:20px;top:676px;width:861px;height:1px;background:#d5d5d5"></div>
<div class="a" style="left:44px;top:650px;width:1px;height:26px;background:#d5d5d5"></div>
<div class="a" style="left:124px;top:650px;width:1px;height:26px;background:#d5d5d5"></div>
<div class="a" style="left:224px;top:650px;width:1px;height:26px;background:#d5d5d5"></div>
<div class="a" style="left:314px;top:650px;width:1px;height:26px;background:#d5d5d5"></div>
<div class="a" style="left:374px;top:650px;width:1px;height:26px;background:#d5d5d5"></div>
<div class="a" style="left:574px;top:650px;width:1px;height:26px;background:#d5d5d5"></div>
<div class="a" style="left:594px;top:650px;width:1px;height:26px;background:#d5d5d5"></div>
<div class="a" style="left:744px;top:650px;width:1px;height:26px;background:#d5d5d5"></div>
<div class="a" style="left:829px;top:650px;width:1px;height:26px;background:#d5d5d5"></div>
<svg class="a" style="left:26px;top:657px" width="13" height="13" viewBox="0 0 13 13"><defs><linearGradient id="ug" x1="0" y1="0" x2="1" y2="1"><stop offset="0" stop-color="#d6d6d6"/><stop offset="1" stop-color="#fdfdfd"/></linearGradient></defs><rect x="0.6" y="0.6" width="11.8" height="11.8" fill="url(#ug)" stroke="#2f5f90" stroke-width="1.3"/></svg>
<div class="t" style="left:53.94px;top:657px;font-size:14px;line-height:14px;color:#111;transform:scaleX(0.9000);transform-origin:0 0;-webkit-text-stroke:0.2px #111;">24/11/2025</div>
<div class="t" style="left:144.29px;top:657px;font-size:14px;line-height:14px;color:#111;transform:scaleX(0.9000);transform-origin:0 0;-webkit-text-stroke:0.2px #111;">D2511-042</div>
<div class="t" style="left:228.16px;top:657px;font-size:14px;line-height:14px;color:#111;transform:scaleX(0.9300);transform-origin:0 0;-webkit-text-stroke:0.2px #111;">En cours</div>
<div class="a" style="left:0px;top:677px;width:19px;height:27px;background:#d9e7c1"></div>
<div class="a" style="left:19px;top:677px;width:1px;height:27px;background:#8c8c8c"></div>
<div class="a" style="left:0px;top:703px;width:19px;height:1px;background:#8d8b22"></div>
<div class="a" style="left:20px;top:677px;width:861px;height:26px;background:#f8fbe8"></div>
<div class="a" style="left:20px;top:703px;width:861px;height:1px;background:#d5d5d5"></div>
<div class="a" style="left:44px;top:677px;width:1px;height:26px;background:#d5d5d5"></div>
<div class="a" style="left:124px;top:677px;width:1px;height:26px;background:#d5d5d5"></div>
<div class="a" style="left:224px;top:677px;width:1px;height:26px;background:#d5d5d5"></div>
<div class="a" style="left:314px;top:677px;width:1px;height:26px;background:#d5d5d5"></div>
<div class="a" style="left:374px;top:677px;width:1px;height:26px;background:#d5d5d5"></div>
<div class="a" style="left:574px;top:677px;width:1px;height:26px;background:#d5d5d5"></div>
<div class="a" style="left:594px;top:677px;width:1px;height:26px;background:#d5d5d5"></div>
<div class="a" style="left:744px;top:677px;width:1px;height:26px;background:#d5d5d5"></div>
<div class="a" style="left:829px;top:677px;width:1px;height:26px;background:#d5d5d5"></div>
<svg class="a" style="left:26px;top:684px" width="13" height="13" viewBox="0 0 13 13"><defs><linearGradient id="ug" x1="0" y1="0" x2="1" y2="1"><stop offset="0" stop-color="#d6d6d6"/><stop offset="1" stop-color="#fdfdfd"/></linearGradient></defs><rect x="0.6" y="0.6" width="11.8" height="11.8" fill="url(#ug)" stroke="#2f5f90" stroke-width="1.3"/></svg>
<div class="t" style="left:53.94px;top:684px;font-size:14px;line-height:14px;color:#157c19;transform:scaleX(0.9000);transform-origin:0 0;-webkit-text-stroke:0.2px #157c19;">24/11/2025</div>
<div class="t" style="left:144.29px;top:684px;font-size:14px;line-height:14px;color:#157c19;transform:scaleX(0.9000);transform-origin:0 0;-webkit-text-stroke:0.2px #157c19;">D2511-041</div>
<div class="t" style="left:228.16px;top:684px;font-size:14px;line-height:14px;color:#157c19;transform:scaleX(0.9300);transform-origin:0 0;-webkit-text-stroke:0.2px #157c19;">Accepté</div>
<div class="a" style="left:0px;top:704px;width:19px;height:27px;background:#d9e7c1"></div>
<div class="a" style="left:19px;top:704px;width:1px;height:27px;background:#8c8c8c"></div>
<div class="a" style="left:0px;top:730px;width:19px;height:1px;background:#8d8b22"></div>
<div class="a" style="left:20px;top:704px;width:861px;height:26px;background:#f8fbe8"></div>
<div class="a" style="left:20px;top:730px;width:861px;height:1px;background:#d5d5d5"></div>
<div class="a" style="left:44px;top:704px;width:1px;height:26px;background:#d5d5d5"></div>
<div class="a" style="left:124px;top:704px;width:1px;height:26px;background:#d5d5d5"></div>
<div class="a" style="left:224px;top:704px;width:1px;height:26px;background:#d5d5d5"></div>
<div class="a" style="left:314px;top:704px;width:1px;height:26px;background:#d5d5d5"></div>
<div class="a" style="left:374px;top:704px;width:1px;height:26px;background:#d5d5d5"></div>
<div class="a" style="left:574px;top:704px;width:1px;height:26px;background:#d5d5d5"></div>
<div class="a" style="left:594px;top:704px;width:1px;height:26px;background:#d5d5d5"></div>
<div class="a" style="left:744px;top:704px;width:1px;height:26px;background:#d5d5d5"></div>
<div class="a" style="left:829px;top:704px;width:1px;height:26px;background:#d5d5d5"></div>
<svg class="a" style="left:26px;top:711px" width="13" height="13" viewBox="0 0 13 13"><defs><linearGradient id="ug" x1="0" y1="0" x2="1" y2="1"><stop offset="0" stop-color="#d6d6d6"/><stop offset="1" stop-color="#fdfdfd"/></linearGradient></defs><rect x="0.6" y="0.6" width="11.8" height="11.8" fill="url(#ug)" stroke="#2f5f90" stroke-width="1.3"/></svg>
<div class="t" style="left:53.94px;top:711px;font-size:14px;line-height:14px;color:#157c19;transform:scaleX(0.9000);transform-origin:0 0;-webkit-text-stroke:0.2px #157c19;">24/11/2025</div>
<div class="t" style="left:144.29px;top:711px;font-size:14px;line-height:14px;color:#157c19;transform:scaleX(0.9000);transform-origin:0 0;-webkit-text-stroke:0.2px #157c19;">D2511-040</div>
<div class="t" style="left:228.16px;top:711px;font-size:14px;line-height:14px;color:#157c19;transform:scaleX(0.9300);transform-origin:0 0;-webkit-text-stroke:0.2px #157c19;">Accepté</div>
<div class="t" style="left:317.16px;top:711px;font-size:14px;line-height:14px;color:#157c19;transform:scaleX(0.9000);transform-origin:0 0;-webkit-text-stroke:0.2px #157c19;">M.</div>
<div class="t" style="left:377.16px;top:711px;font-size:14px;line-height:14px;color:#157c19;transform:scaleX(0.9300);transform-origin:0 0;-webkit-text-stroke:0.2px #157c19;">AGIER Arnaud</div>
<div class="a" style="left:299px;top:55px;width:572px;height:651px;background:#1a1e1f;border-radius:7px;box-shadow:0 0 0 1px rgba(0,0,0,0.3),0 6px 36px rgba(0,0,0,0.30),0 0 8px rgba(0,0,0,0.10),0 14px 22px rgba(0,0,0,0.16)"></div>
<svg class="a" style="left:315px;top:71px" width="16" height="16" viewBox="0 0 16 16"><rect x="2.5" y="0.5" width="13" height="15" rx="1.5" fill="#1b7a37"/><path d="M2.5 5.5 V2 Q2.5 0.5 4 0.5 H9 V5.5 Z" fill="#57cc5a"/><path d="M9 0.5 H14 Q15.5 0.5 15.5 2 V5.5 H9 Z" fill="#9be36f"/><rect x="0" y="5" width="8.5" height="8.5" rx="1" fill="#0e5b2c"/><path d="M2.2 7 L6.2 11.5 M6.2 7 L2.2 11.5" stroke="#fff" stroke-width="1.5"/></svg>
<svg class="a" style="left:352px;top:77px" width="9" height="6" viewBox="0 0 9 6"><path d="M0.8 0.8 L3.2 3 L0.8 5.2 M4.8 0.8 L7.2 3 L4.8 5.2" fill="none" stroke="#e0e0e0" stroke-width="1.1"/></svg>
<div class="t" style="left:384.78px;top:74px;font-size:12px;line-height:12px;color:#e6e6e6;transform:scaleX(0.9263);transform-origin:0 0;">devis.xls...</div>
<div class="a" style="left:451px;top:79px;width:3px;height:3px;background:#ddd"></div>
<div class="t" style="left:460.28px;top:74px;font-size:12px;line-height:12px;color:#e6e6e6;transform:scaleX(0.9404);transform-origin:0 0;">Enregistré dans ce PC</div>
<svg class="a" style="left:577px;top:76px" width="11" height="7" viewBox="0 0 11 7"><path d="M1 1 L5.5 5.5 L10 1" fill="none" stroke="#ddd" stroke-width="1.3"/></svg>
<svg class="a" style="left:637px;top:72px" width="16" height="15" viewBox="0 0 16 15"><circle cx="9.8" cy="5.6" r="4.4" fill="none" stroke="#ddd" stroke-width="1.3"/><path d="M6.6 8.8 L1.6 13.8" stroke="#ddd" stroke-width="1.5" stroke-linecap="round"/></svg>
<div class="a" style="left:690px;top:67px;width:24px;height:24px;border-radius:50%;background:#cd4a1a"></div>
<div class="t" style="left:695.91px;top:75px;font-size:10px;line-height:10px;color:#f4f4f4;transform:scaleX(0.8426);transform-origin:0 0;">SO</div>
<div class="a" style="left:745px;top:78px;width:10px;height:1px;background:#e0e0e0"></div>
<div class="a" style="left:793px;top:74px;width:10px;height:10px;border:1px solid #e0e0e0;box-sizing:border-box"></div>
<svg class="a" style="left:840px;top:73px" width="12" height="12" viewBox="0 0 12 12"><path d="M1 1 L11 11 M11 1 L1 11" stroke="#ddd" stroke-width="1.2"/></svg>
<div class="t" style="left:311.28px;top:113px;font-size:12px;line-height:12px;color:#e8e8e8;">Fichier</div>
<div class="t" style="left:361.28px;top:113px;font-size:12px;line-height:12px;color:#e8e8e8;width:34.22px;overflow:hidden;-webkit-text-stroke:0.35px #e8e8e8;">Accueil</div>
<div class="t" style="left:403.78px;top:113px;font-size:12px;line-height:12px;color:#e8e8e8;width:34.72px;overflow:hidden;">Insertion</div>
<div class="t" style="left:447.78px;top:113px;font-size:12px;line-height:12px;color:#e8e8e8;width:34.72px;overflow:hidden;">Dessin</div>
<div class="t" style="left:490.78px;top:113px;font-size:12px;line-height:12px;color:#e8e8e8;width:34.72px;overflow:hidden;">Mise en page</div>
<div class="t" style="left:535.28px;top:113px;font-size:12px;line-height:12px;color:#e8e8e8;width:34.22px;overflow:hidden;">Formules</div>
<div class="t" style="left:578.78px;top:113px;font-size:12px;line-height:12px;color:#e8e8e8;width:34.72px;overflow:hidden;">Données</div>
<div class="t" style="left:622.78px;top:113px;font-size:12px;line-height:12px;color:#e8e8e8;width:34.72px;overflow:hidden;">Révision</div>
<div class="t" style="left:666.28px;top:113px;font-size:12px;line-height:12px;color:#e8e8e8;width:35.22px;overflow:hidden;">Affichage</div>
<div class="t" style="left:710.78px;top:113px;font-size:12px;line-height:12px;color:#e8e8e8;width:34.72px;overflow:hidden;">Automatiser</div>
<div class="t" style="left:754.78px;top:113px;font-size:12px;line-height:12px;color:#e8e8e8;">Aide</div>
<div class="a" style="left:399px;top:107px;width:1px;height:21px;background:#4b4b4b"></div>
<div class="a" style="left:443px;top:107px;width:1px;height:21px;background:#4b4b4b"></div>
<div class="a" style="left:486px;top:107px;width:1px;height:21px;background:#4b4b4b"></div>
<div class="a" style="left:530px;top:107px;width:1px;height:21px;background:#4b4b4b"></div>
<div class="a" style="left:574px;top:107px;width:1px;height:21px;background:#4b4b4b"></div>
<div class="a" style="left:618px;top:107px;width:1px;height:21px;background:#4b4b4b"></div>
<div class="a" style="left:662px;top:107px;width:1px;height:21px;background:#4b4b4b"></div>
<div class="a" style="left:706px;top:107px;width:1px;height:21px;background:#4b4b4b"></div>
<div class="a" style="left:750px;top:107px;width:1px;height:21px;background:#4b4b4b"></div>
<div class="a" style="left:788px;top:107px;width:1px;height:21px;background:#4b4b4b"></div>
<div class="a" style="left:362px;top:128px;width:33px;height:2px;background:#5cc07a;border-radius:1px"></div>
<div class="a" style="left:794px;top:106px;width:24px;height:24px;border:1px solid #6e6e6e;border-radius:5px;box-sizing:border-box;background:#232323"></div>
<svg class="a" style="left:799px;top:112px" width="14" height="12" viewBox="0 0 14 12"><path d="M1.2 1.2 H12.2 V8 H5.2 L2.6 10.8 V8 H1.2 Z" fill="none" stroke="#e8e8e8" stroke-width="1.1"/></svg>
<div class="a" style="left:826px;top:106px;width:32px;height:24px;background:#3ba55c;border-radius:5px"></div>
<svg class="a" style="left:829px;top:110px" width="26" height="16" viewBox="0 0 26 16"><path d="M2.6 6.5 V14.4 H12 V11.2" fill="none" stroke="#0c2113" stroke-width="1.15"/><path d="M4.6 12.2 C4.8 8.6 7.4 6.6 10.6 6.6 V8.8 L14.2 5.2 L10.6 1.6 V3.8 C7 3.8 4.6 7.2 4.6 12.2 Z" fill="none" stroke="#0c2113" stroke-width="1.1" stroke-linejoin="round"/><path d="M19.5 7.2 L21.6 9.3 L23.7 7.2" fill="none" stroke="#0c2113" stroke-width="1.2"/></svg>
<div class="a" style="left:307px;top:134px;width:554px;height:98px;background:#242424;border-radius:8px"></div>
<svg class="a" style="left:332px;top:139px" width="30" height="32" viewBox="0 0 30 32"><path d="M2.6 5.6 V27.6 H13.5" fill="none" stroke="#f0a11d" stroke-width="2.3"/><path d="M1.5 6.4 H6 M17.5 6.4 H20 V12.4" fill="none" stroke="#f0a11d" stroke-width="2.3"/><path d="M5.4 8.5 H18 V4.6 H14.4 Q13.6 1 11.7 1 Q9.8 1 9 4.6 H5.4 Z" fill="#242424" stroke="#c8c8c8" stroke-width="1.1" stroke-linejoin="round"/><rect x="14.5" y="13.9" width="13.2" height="16.8" fill="#242424" stroke="#d6d6d6" stroke-width="1.2"/></svg>
<div class="t" style="left:324.78px;top:175px;font-size:12px;line-height:12px;color:#e8e8e8;transform:scaleX(0.9038);transform-origin:0 0;">Presse-</div>
<div class="t" style="left:319.78px;top:188px;font-size:12px;line-height:12px;color:#e8e8e8;transform:scaleX(0.9376);transform-origin:0 0;">papiers</div>
<svg class="a" style="left:360px;top:194px" width="6.5" height="4.2" viewBox="0 0 6.5 4.2"><path d="M0.8 0.8 L3.25 3.2 L5.7 0.8" fill="none" stroke="#dcdcdc" stroke-width="1.2"/></svg>
<div class="a" style="left:377px;top:139px;width:1px;height:87px;background:#4b4b4b"></div>
<svg class="a" style="left:389px;top:139px" width="33" height="32" viewBox="0 0 33 32"><path d="M7.5 21.5 L16 1.5 L24.5 21.5 M10.6 15 H21.4" fill="none" stroke="#d8d8d8" stroke-width="1.3"/><rect x="0.5" y="23" width="31.5" height="8" fill="#fbfbfb"/></svg>
<div class="t" style="left:389.28px;top:175px;font-size:12px;line-height:12px;color:#e8e8e8;transform:scaleX(0.9772);transform-origin:0 0;">Police</div>
<svg class="a" style="left:401px;top:194px" width="6.5" height="4.2" viewBox="0 0 6.5 4.2"><path d="M0.8 0.8 L3.25 3.2 L5.7 0.8" fill="none" stroke="#dcdcdc" stroke-width="1.2"/></svg>
<div class="a" style="left:432px;top:139px;width:1px;height:87px;background:#4b4b4b"></div>
<div class="a" style="left:458px;top:143px;width:28px;height:1px;background:#d8d8d8"></div>
<div class="a" style="left:463px;top:148px;width:19px;height:1px;background:#d8d8d8"></div>
<div class="a" style="left:458px;top:153px;width:28px;height:1px;background:#d8d8d8"></div>
<div class="a" style="left:463px;top:158px;width:19px;height:1px;background:#d8d8d8"></div>
<div class="a" style="left:458px;top:163px;width:28px;height:1px;background:#d8d8d8"></div>
<div class="t" style="left:440.78px;top:175px;font-size:12px;line-height:12px;color:#e8e8e8;transform:scaleX(1.0410);transform-origin:0 0;">Alignement</div>
<svg class="a" style="left:468px;top:194px" width="6.5" height="4.2" viewBox="0 0 6.5 4.2"><path d="M0.8 0.8 L3.25 3.2 L5.7 0.8" fill="none" stroke="#dcdcdc" stroke-width="1.2"/></svg>
<div class="a" style="left:512px;top:139px;width:1px;height:87px;background:#4b4b4b"></div>
<svg class="a" style="left:529px;top:140px" width="28" height="28" viewBox="0 0 28 28"><circle cx="6.5" cy="6.5" r="4.3" fill="none" stroke="#d8d8d8" stroke-width="1.3"/><circle cx="20.5" cy="20.5" r="4.3" fill="none" stroke="#d8d8d8" stroke-width="1.3"/><path d="M22 1.5 L5 26" stroke="#d8d8d8" stroke-width="1.3"/></svg>
<div class="t" style="left:521.28px;top:175px;font-size:12px;line-height:12px;color:#e8e8e8;transform:scaleX(1.0427);transform-origin:0 0;">Nombre</div>
<svg class="a" style="left:539px;top:194px" width="6.5" height="4.2" viewBox="0 0 6.5 4.2"><path d="M0.8 0.8 L3.25 3.2 L5.7 0.8" fill="none" stroke="#dcdcdc" stroke-width="1.2"/></svg>
<div class="a" style="left:574px;top:139px;width:1px;height:87px;background:#4b4b4b"></div>
<svg class="a" style="left:587px;top:142px" width="17" height="14" viewBox="0 0 17 14"><rect x="0.5" y="0.5" width="16" height="13" fill="none" stroke="#c0c0c0"/><path d="M0.5 4.6 H16.5 M0.5 9.4 H16.5 M3.5 0.5 V13.5 M11.5 0.5 V13.5 M13.8 0.5 V13.5" stroke="#c0c0c0"/><rect x="3.5" y="1" width="5.8" height="3.6" fill="#e5302e"/><rect x="3.5" y="9.6" width="7.8" height="3.6" fill="#e5302e"/><rect x="3.5" y="5.1" width="2.6" height="4.1" fill="#2f86de"/></svg>
<svg class="a" style="left:587px;top:168px" width="17" height="15" viewBox="0 0 17 15"><rect x="0.5" y="0.5" width="16" height="13" fill="none" stroke="#c0c0c0"/><path d="M0.5 4.5 H16.5 M0.5 9 H16.5 M5.5 0.5 V13.5 M11 0.5 V13.5" stroke="#c0c0c0"/><rect x="5.5" y="4.5" width="11" height="9" fill="#2f86de"/><path d="M6 11.5 L15.5 3 L16.3 3.8 L7.6 13 Z" fill="#d0d0d0" stroke="#9a9a9a" stroke-width="0.5"/><path d="M2.5 14.5 Q3.5 11.5 6 11.5 L7.6 13 Q6.5 14.8 2.5 14.5 Z" fill="#4aa3ef"/></svg>
<svg class="a" style="left:587px;top:194px" width="17" height="15" viewBox="0 0 17 15"><rect x="0.5" y="0.5" width="16" height="13" fill="none" stroke="#c0c0c0"/><path d="M0.5 3.5 H16.5 M3 0.5 V13.5" stroke="#c0c0c0"/><rect x="3" y="3.5" width="11.5" height="8.5" fill="#2f86de"/><path d="M6 11.5 L15.5 3 L16.3 3.8 L7.6 13 Z" fill="#d0d0d0" stroke="#9a9a9a" stroke-width="0.5"/><path d="M2.5 14.5 Q3.5 11.5 6 11.5 L7.6 13 Q6.5 14.8 2.5 14.5 Z" fill="#4aa3ef"/></svg>
<div class="t" style="left:606.78px;top:144px;font-size:12px;line-height:12px;color:#e8e8e8;transform:scaleX(1.0310);transform-origin:0 0;">Mise en forme conditionnelle</div>
<svg class="a" style="left:766px;top:148px" width="6" height="4.5" viewBox="0 0 6 4.5"><path d="M0.8 0.8 L3.0 3.5 L5.2 0.8" fill="none" stroke="#dcdcdc" stroke-width="1.2"/></svg>
<div class="t" style="left:606.78px;top:170px;font-size:12px;line-height:12px;color:#e8e8e8;">Mettre sous forme de tableau</div>
<svg class="a" style="left:766px;top:174px" width="6" height="4.5" viewBox="0 0 6 4.5"><path d="M0.8 0.8 L3.0 3.5 L5.2 0.8" fill="none" stroke="#dcdcdc" stroke-width="1.2"/></svg>
<div class="t" style="left:606.78px;top:196px;font-size:12px;line-height:12px;color:#e8e8e8;transform:scaleX(0.9482);transform-origin:0 0;">Styles de cellules</div>
<svg class="a" style="left:699px;top:200px" width="6" height="4.5" viewBox="0 0 6 4.5"><path d="M0.8 0.8 L3.0 3.5 L5.2 0.8" fill="none" stroke="#dcdcdc" stroke-width="1.2"/></svg>
<div class="t" style="left:667.58px;top:218px;font-size:11px;line-height:11px;color:#e8e8e8;transform:scaleX(0.9630);transform-origin:0 0;">Styles</div>
<div class="a" style="left:789px;top:139px;width:1px;height:87px;background:#4b4b4b"></div>
<div class="a" style="left:805px;top:143px;width:7px;height:22px;border:1px solid #b8b8b8;border-right:none;box-sizing:border-box"></div>
<div class="a" style="left:805px;top:150px;width:7px;height:1px;background:#b8b8b8"></div>
<div class="a" style="left:805px;top:157px;width:7px;height:1px;background:#b8b8b8"></div>
<div class="t" style="left:797.78px;top:175px;font-size:12px;line-height:12px;color:#e8e8e8;width:12.22px;overflow:hidden;">Cellules</div>
<div class="a" style="left:810px;top:133px;width:25px;height:100px;border:1px solid #6a6a6a;box-sizing:border-box;background:#242424"></div>
<svg class="a" style="left:819px;top:179px" width="5" height="7" viewBox="0 0 5 7"><path d="M0.8 0.8 L3.6 3.5 L0.8 6.2" fill="none" stroke="#dcdcdc" stroke-width="1.1"/></svg>
<svg class="a" style="left:842px;top:216px" width="11" height="6.5" viewBox="0 0 11 6.5"><path d="M0.8 0.8 L5.5 5.5 L10.2 0.8" fill="none" stroke="#dcdcdc" stroke-width="1.4"/></svg>
<div class="a" style="left:307px;top:241px;width:103px;height:26px;border:1px solid #545454;border-radius:5px;box-sizing:border-box;background:#1f1f1f"></div>
<div class="t" style="left:313.22px;top:248px;font-size:13px;line-height:13px;color:#eeeeee;">A1</div>
<svg class="a" style="left:392px;top:252px" width="11" height="6.5" viewBox="0 0 11 6.5"><path d="M0.8 0.8 L5.5 5.5 L10.2 0.8" fill="none" stroke="#dcdcdc" stroke-width="1.3"/></svg>
<div class="a" style="left:418px;top:249px;width:2px;height:2px;background:#cfcfcf;border-radius:1px"></div>
<div class="a" style="left:418px;top:253px;width:2px;height:2px;background:#cfcfcf;border-radius:1px"></div>
<div class="a" style="left:418px;top:257px;width:2px;height:2px;background:#cfcfcf;border-radius:1px"></div>
<div class="a" style="left:429px;top:241px;width:86px;height:26px;border:1px solid #545454;border-radius:5px;box-sizing:border-box;background:#1f1f1f"></div>
<svg class="a" style="left:436px;top:248px" width="40" height="13" viewBox="0 0 40 13"><path d="M1 1 L12 12 M12 1 L1 12" stroke="#6b6b6b" stroke-width="1.3"/><path d="M22.5 6.5 L27 11 L38.5 1" fill="none" stroke="#6b6b6b" stroke-width="1.3"/></svg>
<div class="t" style="left:483.04px;top:245px;font-size:16px;line-height:16px;color:#dddddd;font-family:'Liberation Serif',serif;font-style:italic;">fx</div>
<svg class="a" style="left:502px;top:252px" width="10.5" height="6" viewBox="0 0 10.5 6"><path d="M0.8 0.8 L5.25 5 L9.7 0.8" fill="none" stroke="#bdbdbd" stroke-width="1.2"/></svg>
<div class="a" style="left:519px;top:241px;width:343px;height:26px;border:1px solid #545454;border-radius:5px;box-sizing:border-box;background:#1f1f1f"></div>
<svg class="a" style="left:846px;top:252px" width="11" height="6.5" viewBox="0 0 11 6.5"><path d="M0.8 0.8 L5.5 5.5 L10.2 0.8" fill="none" stroke="#dcdcdc" stroke-width="1.3"/></svg>
<div class="a" style="left:299px;top:274px;width:549px;height:17px;background:#0a0a0a"></div>
<div class="a" style="left:299px;top:291px;width:25px;height:361px;background:#0a0a0a"></div>
<div class="a" style="left:324px;top:291px;width:524px;height:361px;background:#ffffff"></div>
<div class="a" style="left:338px;top:291px;width:1px;height:361px;background:#dbdbdb"></div>
<div class="a" style="left:338px;top:275px;width:1px;height:16px;background:#6a6a6a"></div>
<div class="a" style="left:359px;top:291px;width:1px;height:361px;background:#dbdbdb"></div>
<div class="a" style="left:359px;top:275px;width:1px;height:16px;background:#6a6a6a"></div>
<div class="a" style="left:436px;top:291px;width:1px;height:361px;background:#dbdbdb"></div>
<div class="a" style="left:436px;top:275px;width:1px;height:16px;background:#6a6a6a"></div>
<div class="a" style="left:534px;top:291px;width:1px;height:361px;background:#dbdbdb"></div>
<div class="a" style="left:534px;top:275px;width:1px;height:16px;background:#6a6a6a"></div>
<div class="a" style="left:618px;top:291px;width:1px;height:361px;background:#dbdbdb"></div>
<div class="a" style="left:618px;top:275px;width:1px;height:16px;background:#6a6a6a"></div>
<div class="a" style="left:674px;top:291px;width:1px;height:361px;background:#dbdbdb"></div>
<div class="a" style="left:674px;top:275px;width:1px;height:16px;background:#6a6a6a"></div>
<div class="a" style="left:324px;top:274px;width:14px;height:17px;background:#6b6b6b"></div>
<div class="a" style="left:299px;top:291px;width:25px;height:26px;background:#6b6b6b"></div>
<svg class="a" style="left:312px;top:278px" width="10" height="10" viewBox="0 0 10 10"><path d="M10 0 L10 10 L0 10 Z" fill="#5c5c5c"/></svg>
<div class="t" style="left:326.56px;top:275px;font-size:14px;line-height:14px;color:#f2f2f2;transform:scaleX(0.9500);transform-origin:0 0;-webkit-text-stroke:0.2px #f2f2f2;">A</div>
<div class="t" style="left:344.06px;top:275px;font-size:14px;line-height:14px;color:#f2f2f2;transform:scaleX(0.9500);transform-origin:0 0;-webkit-text-stroke:0.2px #f2f2f2;">B</div>
<div class="t" style="left:392.70px;top:275px;font-size:14px;line-height:14px;color:#f2f2f2;transform:scaleX(0.9500);transform-origin:0 0;-webkit-text-stroke:0.2px #f2f2f2;">C</div>
<div class="t" style="left:480.20px;top:275px;font-size:14px;line-height:14px;color:#f2f2f2;transform:scaleX(0.9500);transform-origin:0 0;-webkit-text-stroke:0.2px #f2f2f2;">D</div>
<div class="t" style="left:571.56px;top:275px;font-size:14px;line-height:14px;color:#f2f2f2;transform:scaleX(0.9500);transform-origin:0 0;-webkit-text-stroke:0.2px #f2f2f2;">E</div>
<div class="t" style="left:641.94px;top:275px;font-size:14px;line-height:14px;color:#f2f2f2;transform:scaleX(0.9500);transform-origin:0 0;-webkit-text-stroke:0.2px #f2f2f2;">F</div>
<div class="t" style="left:766.83px;top:275px;font-size:14px;line-height:14px;color:#f2f2f2;transform:scaleX(0.9500);transform-origin:0 0;-webkit-text-stroke:0.2px #f2f2f2;">G</div>
<div class="a" style="left:324px;top:317px;width:524px;height:1px;background:#dbdbdb"></div>
<div class="t" style="left:308.50px;top:302px;font-size:14px;line-height:14px;color:#f2f2f2;transform:scaleX(0.9000);transform-origin:0 0;-webkit-text-stroke:0.2px #f2f2f2;">1</div>
<div class="t" style="left:361.66px;top:297px;font-size:14px;line-height:14px;color:#111;transform:scaleX(0.9300);transform-origin:0 0;width:79.94px;overflow:hidden;-webkit-text-stroke:0.2px #111;">Date</div>
<div class="t" style="left:438.66px;top:297px;font-size:14px;line-height:14px;color:#111;transform:scaleX(0.9300);transform-origin:0 0;width:102.52px;overflow:hidden;-webkit-text-stroke:0.2px #111;">N° devis</div>
<div class="t" style="left:536.66px;top:297px;font-size:14px;line-height:14px;color:#111;transform:scaleX(0.9300);transform-origin:0 0;width:87.46px;overflow:hidden;-webkit-text-stroke:0.2px #111;">Etat</div>
<div class="t" style="left:620.66px;top:297px;font-size:14px;line-height:14px;color:#111;transform:scaleX(0.9300);transform-origin:0 0;width:57.35px;overflow:hidden;-webkit-text-stroke:0.2px #111;">Civilité</div>
<div class="t" style="left:676.66px;top:297px;font-size:14px;line-height:14px;color:#111;transform:scaleX(0.9300);transform-origin:0 0;width:184.24px;overflow:hidden;-webkit-text-stroke:0.2px #111;">Client</div>
<div class="a" style="left:324px;top:344px;width:524px;height:1px;background:#dbdbdb"></div>
<div class="a" style="left:299px;top:344px;width:25px;height:1px;background:#262626"></div>
<div class="t" style="left:308.50px;top:329px;font-size:14px;line-height:14px;color:#f2f2f2;transform:scaleX(0.9000);transform-origin:0 0;-webkit-text-stroke:0.2px #f2f2f2;">2</div>
<div class="t" style="left:361.66px;top:324px;font-size:14px;line-height:14px;color:#111;transform:scaleX(0.9000);transform-origin:0 0;width:82.60px;overflow:hidden;-webkit-text-stroke:0.2px #111;">01/04/2026</div>
<div class="t" style="left:438.66px;top:324px;font-size:14px;line-height:14px;color:#111;transform:scaleX(0.9000);transform-origin:0 0;width:105.93px;overflow:hidden;-webkit-text-stroke:0.2px #111;">D2604-017</div>
<div class="t" style="left:536.66px;top:324px;font-size:14px;line-height:14px;color:#111;transform:scaleX(0.9300);transform-origin:0 0;width:87.46px;overflow:hidden;-webkit-text-stroke:0.2px #111;">En cours</div>
<div class="t" style="left:620.66px;top:324px;font-size:14px;line-height:14px;color:#111;transform:scaleX(0.9000);transform-origin:0 0;width:59.27px;overflow:hidden;-webkit-text-stroke:0.2px #111;">M.</div>
<div class="t" style="left:676.66px;top:324px;font-size:14px;line-height:14px;color:#111;transform:scaleX(0.9300);transform-origin:0 0;width:184.24px;overflow:hidden;-webkit-text-stroke:0.2px #111;">BALINET Eric</div>
<div class="a" style="left:324px;top:371px;width:524px;height:1px;background:#dbdbdb"></div>
<div class="a" style="left:299px;top:371px;width:25px;height:1px;background:#262626"></div>
<div class="t" style="left:308.50px;top:356px;font-size:14px;line-height:14px;color:#f2f2f2;transform:scaleX(0.9000);transform-origin:0 0;-webkit-text-stroke:0.2px #f2f2f2;">3</div>
<div class="t" style="left:361.66px;top:351px;font-size:14px;line-height:14px;color:#111;transform:scaleX(0.9000);transform-origin:0 0;width:82.60px;overflow:hidden;-webkit-text-stroke:0.2px #111;">01/04/2026</div>
<div class="t" style="left:438.66px;top:351px;font-size:14px;line-height:14px;color:#111;transform:scaleX(0.9000);transform-origin:0 0;width:105.93px;overflow:hidden;-webkit-text-stroke:0.2px #111;">D2604-016</div>
<div class="t" style="left:536.66px;top:351px;font-size:14px;line-height:14px;color:#111;transform:scaleX(0.9300);transform-origin:0 0;width:87.46px;overflow:hidden;-webkit-text-stroke:0.2px #111;">En cours</div>
<div class="t" style="left:620.66px;top:351px;font-size:14px;line-height:14px;color:#111;transform:scaleX(0.9000);transform-origin:0 0;width:59.27px;overflow:hidden;-webkit-text-stroke:0.2px #111;">M.</div>
<div class="t" style="left:676.66px;top:351px;font-size:14px;line-height:14px;color:#111;transform:scaleX(0.9300);transform-origin:0 0;width:184.24px;overflow:hidden;-webkit-text-stroke:0.2px #111;">BALINET Eric</div>
<div class="a" style="left:324px;top:398px;width:524px;height:1px;background:#dbdbdb"></div>
<div class="a" style="left:299px;top:398px;width:25px;height:1px;background:#262626"></div>
<div class="t" style="left:308.50px;top:383px;font-size:14px;line-height:14px;color:#f2f2f2;transform:scaleX(0.9000);transform-origin:0 0;-webkit-text-stroke:0.2px #f2f2f2;">4</div>
<div class="t" style="left:361.66px;top:378px;font-size:14px;line-height:14px;color:#111;transform:scaleX(0.9000);transform-origin:0 0;width:82.60px;overflow:hidden;-webkit-text-stroke:0.2px #111;">01/04/2026</div>
<div class="t" style="left:438.66px;top:378px;font-size:14px;line-height:14px;color:#111;transform:scaleX(0.9000);transform-origin:0 0;width:105.93px;overflow:hidden;-webkit-text-stroke:0.2px #111;">D2604-015</div>
<div class="t" style="left:536.66px;top:378px;font-size:14px;line-height:14px;color:#111;transform:scaleX(0.9300);transform-origin:0 0;width:87.46px;overflow:hidden;-webkit-text-stroke:0.2px #111;">En cours</div>
<div class="t" style="left:676.66px;top:378px;font-size:14px;line-height:14px;color:#111;transform:scaleX(0.9300);transform-origin:0 0;width:184.24px;overflow:hidden;-webkit-text-stroke:0.2px #111;">MAIRIE DE GORDES (Chorus)</div>
<div class="a" style="left:324px;top:425px;width:524px;height:1px;background:#dbdbdb"></div>
<div class="a" style="left:299px;top:425px;width:25px;height:1px;background:#262626"></div>
<div class="t" style="left:308.50px;top:410px;font-size:14px;line-height:14px;color:#f2f2f2;transform:scaleX(0.9000);transform-origin:0 0;-webkit-text-stroke:0.2px #f2f2f2;">5</div>
<div class="t" style="left:361.66px;top:405px;font-size:14px;line-height:14px;color:#111;transform:scaleX(0.9000);transform-origin:0 0;width:82.60px;overflow:hidden;-webkit-text-stroke:0.2px #111;">01/04/2026</div>
<div class="t" style="left:438.66px;top:405px;font-size:14px;line-height:14px;color:#111;transform:scaleX(0.9000);transform-origin:0 0;width:105.93px;overflow:hidden;-webkit-text-stroke:0.2px #111;">D2604-014</div>
<div class="t" style="left:536.66px;top:405px;font-size:14px;line-height:14px;color:#111;transform:scaleX(0.9300);transform-origin:0 0;width:87.46px;overflow:hidden;-webkit-text-stroke:0.2px #111;">En cours</div>
<div class="t" style="left:676.66px;top:405px;font-size:14px;line-height:14px;color:#111;transform:scaleX(0.9300);transform-origin:0 0;width:184.24px;overflow:hidden;-webkit-text-stroke:0.2px #111;">BARRIERE Automobiles</div>
<div class="a" style="left:324px;top:452px;width:524px;height:1px;background:#dbdbdb"></div>
<div class="a" style="left:299px;top:452px;width:25px;height:1px;background:#262626"></div>
<div class="t" style="left:308.50px;top:437px;font-size:14px;line-height:14px;color:#f2f2f2;transform:scaleX(0.9000);transform-origin:0 0;-webkit-text-stroke:0.2px #f2f2f2;">6</div>
<div class="t" style="left:361.66px;top:432px;font-size:14px;line-height:14px;color:#111;transform:scaleX(0.9000);transform-origin:0 0;width:82.60px;overflow:hidden;-webkit-text-stroke:0.2px #111;">01/04/2026</div>
<div class="t" style="left:438.66px;top:432px;font-size:14px;line-height:14px;color:#111;transform:scaleX(0.9000);transform-origin:0 0;width:105.93px;overflow:hidden;-webkit-text-stroke:0.2px #111;">D2604-013</div>
<div class="t" style="left:536.66px;top:432px;font-size:14px;line-height:14px;color:#111;transform:scaleX(0.9300);transform-origin:0 0;width:87.46px;overflow:hidden;-webkit-text-stroke:0.2px #111;">En cours</div>
<div class="t" style="left:620.66px;top:432px;font-size:14px;line-height:14px;color:#111;transform:scaleX(0.9300);transform-origin:0 0;width:57.35px;overflow:hidden;-webkit-text-stroke:0.2px #111;">M. et Mme</div>
<div class="t" style="left:676.66px;top:432px;font-size:14px;line-height:14px;color:#111;transform:scaleX(0.9300);transform-origin:0 0;width:184.24px;overflow:hidden;-webkit-text-stroke:0.2px #111;">AUDOUIN Eric</div>
<div class="a" style="left:324px;top:479px;width:524px;height:1px;background:#dbdbdb"></div>
<div class="a" style="left:299px;top:479px;width:25px;height:1px;background:#262626"></div>
<div class="t" style="left:308.50px;top:464px;font-size:14px;line-height:14px;color:#f2f2f2;transform:scaleX(0.9000);transform-origin:0 0;-webkit-text-stroke:0.2px #f2f2f2;">7</div>
<div class="t" style="left:361.66px;top:459px;font-size:14px;line-height:14px;color:#111;transform:scaleX(0.9000);transform-origin:0 0;width:82.60px;overflow:hidden;-webkit-text-stroke:0.2px #111;">01/04/2026</div>
<div class="t" style="left:438.66px;top:459px;font-size:14px;line-height:14px;color:#111;transform:scaleX(0.9000);transform-origin:0 0;width:105.93px;overflow:hidden;-webkit-text-stroke:0.2px #111;">D2604-012</div>
<div class="t" style="left:536.66px;top:459px;font-size:14px;line-height:14px;color:#111;transform:scaleX(0.9300);transform-origin:0 0;width:87.46px;overflow:hidden;-webkit-text-stroke:0.2px #111;">En cours</div>
<div class="t" style="left:620.66px;top:459px;font-size:14px;line-height:14px;color:#111;transform:scaleX(0.9300);transform-origin:0 0;width:57.35px;overflow:hidden;-webkit-text-stroke:0.2px #111;">Mme</div>
<div class="t" style="left:676.66px;top:459px;font-size:14px;line-height:14px;color:#111;transform:scaleX(0.9300);transform-origin:0 0;width:184.24px;overflow:hidden;-webkit-text-stroke:0.2px #111;">ALEXANDRO Carla</div>
<div class="a" style="left:324px;top:506px;width:524px;height:1px;background:#dbdbdb"></div>
<div class="a" style="left:299px;top:506px;width:25px;height:1px;background:#262626"></div>
<div class="t" style="left:308.50px;top:491px;font-size:14px;line-height:14px;color:#f2f2f2;transform:scaleX(0.9000);transform-origin:0 0;-webkit-text-stroke:0.2px #f2f2f2;">8</div>
<div class="t" style="left:361.66px;top:486px;font-size:14px;line-height:14px;color:#111;transform:scaleX(0.9000);transform-origin:0 0;width:82.60px;overflow:hidden;-webkit-text-stroke:0.2px #111;">01/04/2026</div>
<div class="t" style="left:438.66px;top:486px;font-size:14px;line-height:14px;color:#111;transform:scaleX(0.9000);transform-origin:0 0;width:105.93px;overflow:hidden;-webkit-text-stroke:0.2px #111;">D2604-011</div>
<div class="t" style="left:536.66px;top:486px;font-size:14px;line-height:14px;color:#111;transform:scaleX(0.9300);transform-origin:0 0;width:87.46px;overflow:hidden;-webkit-text-stroke:0.2px #111;">En cours</div>
<div class="t" style="left:620.66px;top:486px;font-size:14px;line-height:14px;color:#111;transform:scaleX(0.9000);transform-origin:0 0;width:59.27px;overflow:hidden;-webkit-text-stroke:0.2px #111;">M.</div>
<div class="t" style="left:676.66px;top:486px;font-size:14px;line-height:14px;color:#111;transform:scaleX(0.9300);transform-origin:0 0;width:184.24px;overflow:hidden;-webkit-text-stroke:0.2px #111;">AGIER Arnaud</div>
<div class="a" style="left:324px;top:533px;width:524px;height:1px;background:#dbdbdb"></div>
<div class="a" style="left:299px;top:533px;width:25px;height:1px;background:#262626"></div>
<div class="t" style="left:308.50px;top:518px;font-size:14px;line-height:14px;color:#f2f2f2;transform:scaleX(0.9000);transform-origin:0 0;-webkit-text-stroke:0.2px #f2f2f2;">9</div>
<div class="t" style="left:361.66px;top:513px;font-size:14px;line-height:14px;color:#111;transform:scaleX(0.9000);transform-origin:0 0;width:82.60px;overflow:hidden;-webkit-text-stroke:0.2px #111;">01/04/2026</div>
<div class="t" style="left:438.66px;top:513px;font-size:14px;line-height:14px;color:#111;transform:scaleX(0.9000);transform-origin:0 0;width:105.93px;overflow:hidden;-webkit-text-stroke:0.2px #111;">D2604-010</div>
<div class="t" style="left:536.66px;top:513px;font-size:14px;line-height:14px;color:#111;transform:scaleX(0.9300);transform-origin:0 0;width:87.46px;overflow:hidden;-webkit-text-stroke:0.2px #111;">En cours</div>
<div class="t" style="left:676.66px;top:513px;font-size:14px;line-height:14px;color:#111;transform:scaleX(0.9300);transform-origin:0 0;width:184.24px;overflow:hidden;-webkit-text-stroke:0.2px #111;">ALLARD SARL</div>
<div class="a" style="left:324px;top:560px;width:524px;height:1px;background:#dbdbdb"></div>
<div class="a" style="left:299px;top:560px;width:25px;height:1px;background:#262626"></div>
<div class="t" style="left:304.99px;top:545px;font-size:14px;line-height:14px;color:#f2f2f2;transform:scaleX(0.9000);transform-origin:0 0;-webkit-text-stroke:0.2px #f2f2f2;">10</div>
<div class="t" style="left:361.66px;top:540px;font-size:14px;line-height:14px;color:#111;transform:scaleX(0.9000);transform-origin:0 0;width:82.60px;overflow:hidden;-webkit-text-stroke:0.2px #111;">01/04/2026</div>
<div class="t" style="left:438.66px;top:540px;font-size:14px;line-height:14px;color:#111;transform:scaleX(0.9000);transform-origin:0 0;width:105.93px;overflow:hidden;-webkit-text-stroke:0.2px #111;">D2604-009</div>
<div class="t" style="left:536.66px;top:540px;font-size:14px;line-height:14px;color:#111;transform:scaleX(0.9300);transform-origin:0 0;width:87.46px;overflow:hidden;-webkit-text-stroke:0.2px #111;">En cours</div>
<div class="t" style="left:676.66px;top:540px;font-size:14px;line-height:14px;color:#111;transform:scaleX(0.9300);transform-origin:0 0;width:184.24px;overflow:hidden;-webkit-text-stroke:0.2px #111;">PONCET Frères</div>
<div class="a" style="left:324px;top:587px;width:524px;height:1px;background:#dbdbdb"></div>
<div class="a" style="left:299px;top:587px;width:25px;height:1px;background:#262626"></div>
<div class="t" style="left:305.46px;top:572px;font-size:14px;line-height:14px;color:#f2f2f2;transform:scaleX(0.9000);transform-origin:0 0;-webkit-text-stroke:0.2px #f2f2f2;">11</div>
<div class="t" style="left:361.66px;top:567px;font-size:14px;line-height:14px;color:#111;transform:scaleX(0.9000);transform-origin:0 0;width:82.60px;overflow:hidden;-webkit-text-stroke:0.2px #111;">01/04/2026</div>
<div class="t" style="left:438.66px;top:567px;font-size:14px;line-height:14px;color:#111;transform:scaleX(0.9000);transform-origin:0 0;width:105.93px;overflow:hidden;-webkit-text-stroke:0.2px #111;">D2604-008</div>
<div class="t" style="left:536.66px;top:567px;font-size:14px;line-height:14px;color:#111;transform:scaleX(0.9300);transform-origin:0 0;width:87.46px;overflow:hidden;-webkit-text-stroke:0.2px #111;">En cours</div>
<div class="t" style="left:676.66px;top:567px;font-size:14px;line-height:14px;color:#111;transform:scaleX(0.9300);transform-origin:0 0;width:184.24px;overflow:hidden;-webkit-text-stroke:0.2px #111;">BASSARD &amp; CIE</div>
<div class="a" style="left:324px;top:614px;width:524px;height:1px;background:#dbdbdb"></div>
<div class="a" style="left:299px;top:614px;width:25px;height:1px;background:#262626"></div>
<div class="t" style="left:304.99px;top:599px;font-size:14px;line-height:14px;color:#f2f2f2;transform:scaleX(0.9000);transform-origin:0 0;-webkit-text-stroke:0.2px #f2f2f2;">12</div>
<div class="t" style="left:361.66px;top:594px;font-size:14px;line-height:14px;color:#111;transform:scaleX(0.9000);transform-origin:0 0;width:82.60px;overflow:hidden;-webkit-text-stroke:0.2px #111;">01/04/2026</div>
<div class="t" style="left:438.66px;top:594px;font-size:14px;line-height:14px;color:#111;transform:scaleX(0.9000);transform-origin:0 0;width:105.93px;overflow:hidden;-webkit-text-stroke:0.2px #111;">D2604-007</div>
<div class="t" style="left:536.66px;top:594px;font-size:14px;line-height:14px;color:#111;transform:scaleX(0.9300);transform-origin:0 0;width:87.46px;overflow:hidden;-webkit-text-stroke:0.2px #111;">Accepté</div>
<div class="t" style="left:676.66px;top:594px;font-size:14px;line-height:14px;color:#111;transform:scaleX(0.9300);transform-origin:0 0;width:184.24px;overflow:hidden;-webkit-text-stroke:0.2px #111;">PONCET Frères</div>
<div class="a" style="left:324px;top:641px;width:524px;height:1px;background:#dbdbdb"></div>
<div class="a" style="left:299px;top:641px;width:25px;height:1px;background:#262626"></div>
<div class="t" style="left:304.99px;top:626px;font-size:14px;line-height:14px;color:#f2f2f2;transform:scaleX(0.9000);transform-origin:0 0;-webkit-text-stroke:0.2px #f2f2f2;">13</div>
<div class="t" style="left:361.66px;top:621px;font-size:14px;line-height:14px;color:#111;transform:scaleX(0.9000);transform-origin:0 0;width:82.60px;overflow:hidden;-webkit-text-stroke:0.2px #111;">01/04/2026</div>
<div class="t" style="left:438.66px;top:621px;font-size:14px;line-height:14px;color:#111;transform:scaleX(0.9000);transform-origin:0 0;width:105.93px;overflow:hidden;-webkit-text-stroke:0.2px #111;">D2604-006</div>
<div class="t" style="left:536.66px;top:621px;font-size:14px;line-height:14px;color:#111;transform:scaleX(0.9300);transform-origin:0 0;width:87.46px;overflow:hidden;-webkit-text-stroke:0.2px #111;">En cours</div>
<div class="t" style="left:620.66px;top:621px;font-size:14px;line-height:14px;color:#111;transform:scaleX(0.9000);transform-origin:0 0;width:59.27px;overflow:hidden;-webkit-text-stroke:0.2px #111;">M.</div>
<div class="t" style="left:676.66px;top:621px;font-size:14px;line-height:14px;color:#111;transform:scaleX(0.9300);transform-origin:0 0;width:184.24px;overflow:hidden;-webkit-text-stroke:0.2px #111;">BLICK Anthony</div>
<div class="a" style="left:324px;top:668px;width:524px;height:1px;background:#dbdbdb"></div>
<div class="a" style="left:299px;top:668px;width:25px;height:1px;background:#262626"></div>
<div class="t" style="left:304.99px;top:653px;font-size:14px;line-height:14px;color:#f2f2f2;transform:scaleX(0.9000);transform-origin:0 0;-webkit-text-stroke:0.2px #f2f2f2;">14</div>
<div class="t" style="left:361.66px;top:648px;font-size:14px;line-height:14px;color:#111;transform:scaleX(0.9000);transform-origin:0 0;width:82.60px;overflow:hidden;-webkit-text-stroke:0.2px #111;">01/04/2026</div>
<div class="t" style="left:438.66px;top:648px;font-size:14px;line-height:14px;color:#111;transform:scaleX(0.9000);transform-origin:0 0;width:105.93px;overflow:hidden;-webkit-text-stroke:0.2px #111;">D2604-005 A</div>
<div class="t" style="left:536.66px;top:648px;font-size:14px;line-height:14px;color:#111;transform:scaleX(0.9300);transform-origin:0 0;width:87.46px;overflow:hidden;-webkit-text-stroke:0.2px #111;">En cours</div>
<div class="t" style="left:620.66px;top:648px;font-size:14px;line-height:14px;color:#111;transform:scaleX(0.9000);transform-origin:0 0;width:59.27px;overflow:hidden;-webkit-text-stroke:0.2px #111;">M.</div>
<div class="t" style="left:676.66px;top:648px;font-size:14px;line-height:14px;color:#111;transform:scaleX(0.9300);transform-origin:0 0;width:184.24px;overflow:hidden;-webkit-text-stroke:0.2px #111;">BLOIS David</div>
<div class="a" style="left:323px;top:289px;width:17px;height:30px;border:2px solid #1e7145;box-sizing:border-box"></div>
<div class="a" style="left:336px;top:315px;width:5px;height:5px;background:#1e7145"></div>
<div class="a" style="left:848px;top:274px;width:23px;height:378px;background:#1c1e1f"></div>
<div class="a" style="left:852px;top:274px;width:14px;height:378px;background:#171818"></div>
<svg class="a" style="left:855px;top:279px" width="9" height="7" viewBox="0 0 9 7"><path d="M0 7 L4.5 0 L9 7 Z" fill="#9b9b9b"/></svg>
<div class="a" style="left:855px;top:291px;width:9px;height:225px;background:#9b9b9b;border-radius:4.5px"></div>
<svg class="a" style="left:855px;top:643px" width="9" height="7" viewBox="0 0 9 7"><path d="M0 0 L4.5 7 L9 0 Z" fill="#9b9b9b"/></svg>
<div class="a" style="left:299px;top:652px;width:572px;height:32px;background:#171b1c"></div>
<svg class="a" style="left:327px;top:662px" width="8" height="11" viewBox="0 0 8 11"><path d="M7 1 L2 5.5 L7 10" fill="none" stroke="#7a7a7a" stroke-width="1.2"/></svg>
<svg class="a" style="left:360px;top:662px" width="8" height="11" viewBox="0 0 8 11"><path d="M1 1 L6 5.5 L1 10" fill="none" stroke="#7a7a7a" stroke-width="1.2"/></svg>
<div class="a" style="left:415px;top:652px;width:52px;height:28px;background:#ffffff;border-radius:0 0 6px 6px"></div>
<div class="t" style="left:423.28px;top:660px;font-size:12px;line-height:12px;color:#222;transform:scaleX(1.0875);transform-origin:0 0;-webkit-text-stroke:0.45px #222;">Feuil1</div>
<div class="a" style="left:423px;top:675px;width:37px;height:2px;background:#1d7a3d"></div>
<div class="a" style="left:471px;top:660px;width:1px;height:15px;background:#555"></div>
<svg class="a" style="left:514px;top:662px" width="12" height="12" viewBox="0 0 12 12"><path d="M6 0.5 V11.5 M0.5 6 H11.5" stroke="#dcdcdc" stroke-width="1.2"/></svg>
<div class="a" style="left:643px;top:664px;width:2px;height:2px;background:#d8d8d8"></div>
<div class="a" style="left:643px;top:668px;width:2px;height:2px;background:#d8d8d8"></div>
<div class="a" style="left:643px;top:672px;width:2px;height:2px;background:#d8d8d8"></div>
<div class="a" style="left:660px;top:657px;width:189px;height:20px;background:#141818;border-radius:9px"></div>
<svg class="a" style="left:665px;top:663px" width="7" height="9" viewBox="0 0 7 9"><path d="M7 0 L0 4.5 L7 9 Z" fill="#8c8c8c"/></svg>
<div class="a" style="left:677px;top:663px;width:42px;height:9px;background:#8c8c8c;border-radius:4.5px"></div>
<svg class="a" style="left:839px;top:663px" width="7" height="9" viewBox="0 0 7 9"><path d="M0 0 L7 4.5 L0 9 Z" fill="#8c8c8c"/></svg>
<div class="a" style="left:299px;top:684px;width:572px;height:22px;background:#141414;border-top:1px solid #2e2e2e;box-sizing:border-box;border-radius:0 0 7px 7px"></div>
<div class="t" style="left:310.34px;top:690px;font-size:11px;line-height:11px;color:#e8e8e8;transform:scaleX(0.9848);transform-origin:0 0;-webkit-text-stroke:0.2px #e8e8e8;">Prêt</div>
<svg class="a" style="left:349px;top:686px" width="17" height="17" viewBox="0 0 17 17"><circle cx="7" cy="3.8" r="1.7" fill="none" stroke="#e0e0e0" stroke-width="1.1"/><path d="M1.6 5.6 Q1.2 4.3 2.6 4.7 L5.3 5.8 H8.7 L11.4 4.7 Q12.8 4.3 12.4 5.6 L9.2 7.2 V10.2 L10.2 14.6 Q10 15.4 9.1 14.9 L7 11.4 L4.9 14.9 Q4 15.4 3.8 14.6 L4.8 10.2 V7.2 Z" fill="none" stroke="#e0e0e0" stroke-width="1.05" stroke-linejoin="round"/><path d="M11.2 10 Q11.2 8.4 12.8 8.4 Q14.4 8.4 14.4 9.9 Q14.4 11 12.8 11.6 V13" fill="#141414" stroke="#e0e0e0" stroke-width="1.05"/><circle cx="12.8" cy="15" r="0.7" fill="#e0e0e0"/></svg>
<div class="t" style="left:367.84px;top:690px;font-size:11px;line-height:11px;color:#e8e8e8;transform:scaleX(1.0661);transform-origin:0 0;-webkit-text-stroke:0.2px #e8e8e8;">Accessibilité : non disponible</div>
<div class="a" style="left:556px;top:685px;width:40px;height:21px;background:#242424"></div>
<svg class="a" style="left:569px;top:688px" width="13" height="13" viewBox="0 0 13 13"><path d="M0.5 0.5 H12.5 V12.5 H0.5 Z M0.5 4.5 H12.5 M0.5 8.5 H12.5 M4.5 0.5 V12.5 M8.5 0.5 V12.5" fill="none" stroke="#f0f0f0" stroke-width="1.1"/></svg>
<svg class="a" style="left:609px;top:688px" width="14" height="13" viewBox="0 0 14 13"><rect x="0.5" y="0.5" width="13" height="12" fill="none" stroke="#e0e0e0"/><rect x="3" y="2.5" width="8" height="8" fill="none" stroke="#e0e0e0"/><path d="M4.5 4.7 H9.5 M4.5 6.5 H9.5 M4.5 8.3 H9.5" stroke="#e0e0e0"/></svg>
<svg class="a" style="left:649px;top:688px" width="15" height="13" viewBox="0 0 15 13"><rect x="0.5" y="0.5" width="13.5" height="12" fill="none" stroke="#e0e0e0"/><path d="M4.5 0.5 V6.5 H8.5 V0.5" fill="none" stroke="#e0e0e0"/></svg>
<div class="a" style="left:683px;top:694px;width:7px;height:1px;background:#dcdcdc"></div>
<div class="a" style="left:695px;top:694px;width:100px;height:1px;background:#9c9c9c"></div>
<div class="a" style="left:743px;top:690px;width:5px;height:11px;background:#a8a8a8"></div>
<svg class="a" style="left:800px;top:690px" width="9" height="9" viewBox="0 0 9 9"><path d="M4.5 0 V9 M0 4.5 H9" stroke="#dcdcdc" stroke-width="1.1"/></svg>
<div class="t" style="left:821.34px;top:690px;font-size:11px;line-height:11px;color:#e8e8e8;transform:scaleX(0.9568);transform-origin:0 0;">100 %</div>
</body></html>
